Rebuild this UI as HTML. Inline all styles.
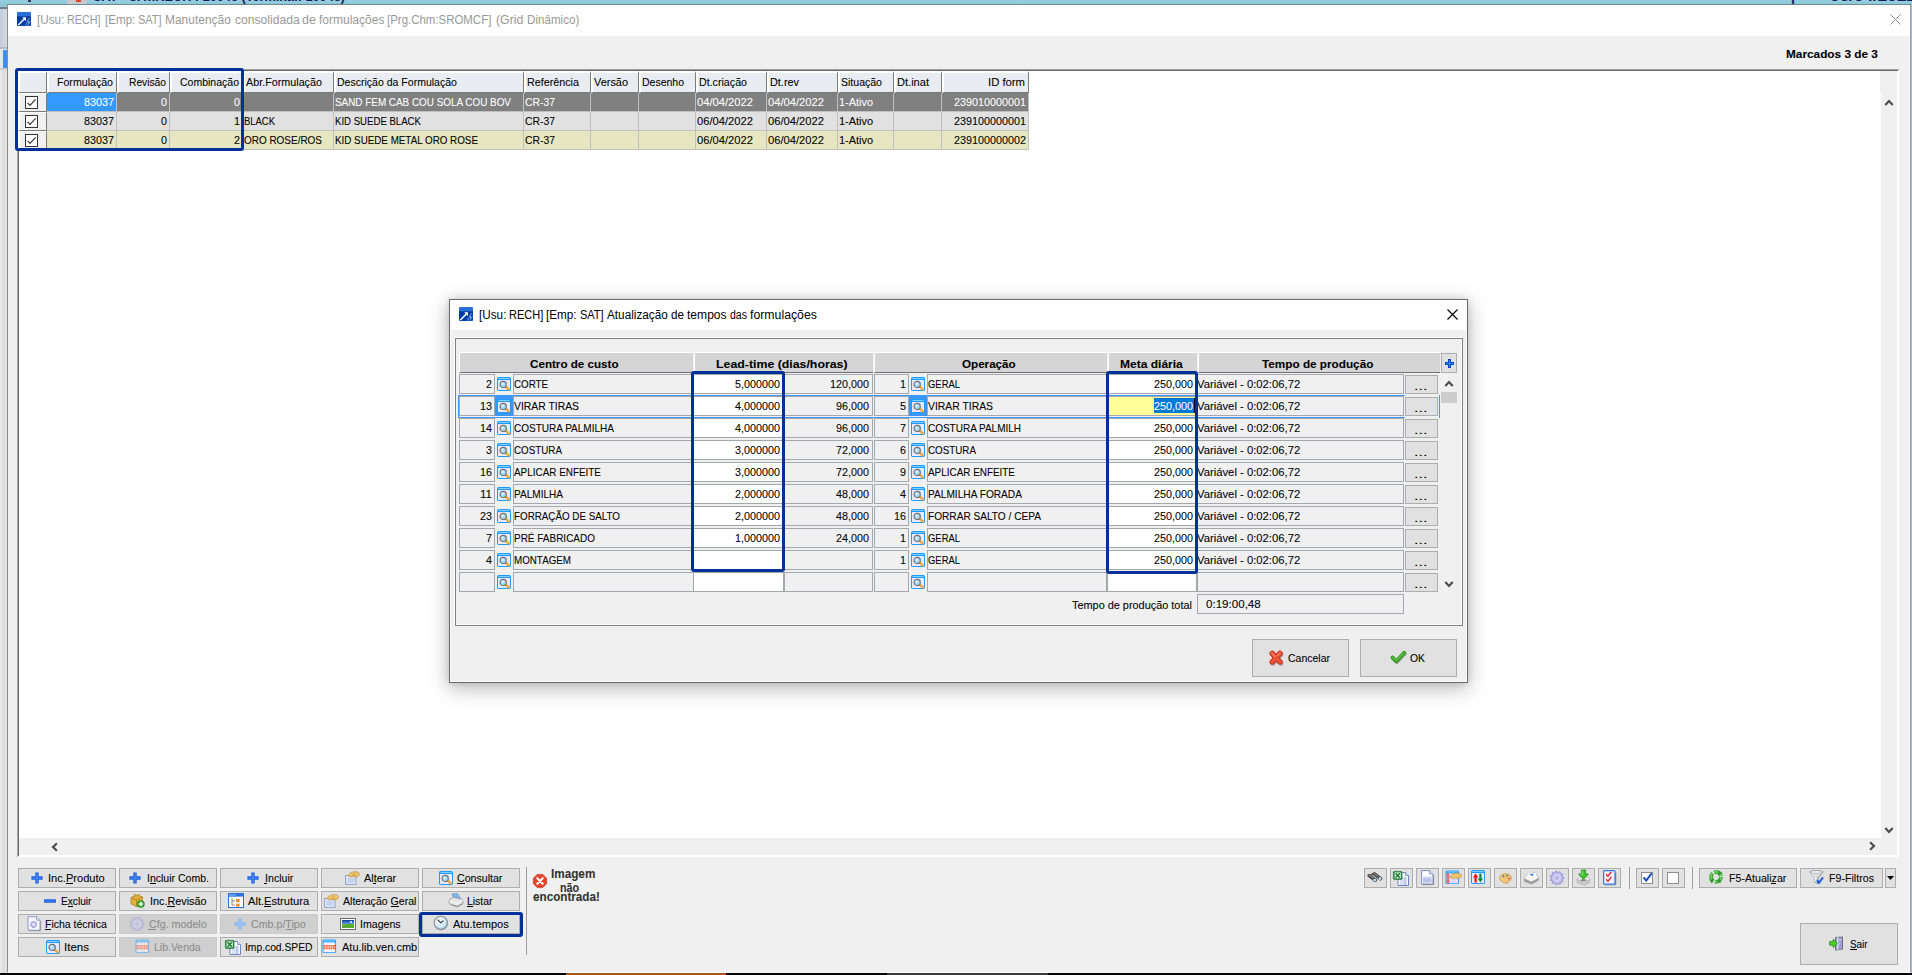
<!DOCTYPE html>
<html><head><meta charset="utf-8"><title>SROMCF</title>
<style>
html,body{margin:0;padding:0;}
body{width:1912px;height:975px;overflow:hidden;position:relative;background:#f0f0f0;font-family:"Liberation Sans",sans-serif;font-size:11px;}
div{position:absolute;box-sizing:border-box;}
svg{position:absolute;overflow:visible;}
.t{white-space:pre;}
u{text-decoration:underline;text-underline-offset:1px;}
</style></head><body>
<div style="left:0px;top:0px;width:1912px;height:5px;background:linear-gradient(#93d0e2,#8fc4d6);"></div>
<div style="left:0px;top:5px;width:8px;height:970px;background:linear-gradient(90deg,#ececec,#dcdcdc 40%,#e6e6e6);"></div>
<div style="left:0px;top:5px;width:8px;height:2px;background:#8fcadc;"></div>
<div style="left:0px;top:6.5px;width:8px;height:2px;background:#6f7b8c;"></div>
<div style="left:0px;top:8.5px;width:8px;height:38.5px;background:linear-gradient(90deg,#c3ccd9,#d6dce5);"></div>
<div style="left:0px;top:47px;width:8px;height:2px;background:#b4bac4;"></div>
<div style="left:0px;top:49px;width:8px;height:20px;background:#e6e6e6;"></div>
<div style="left:3px;top:50px;width:5px;height:18px;background:#3d90e8;"></div>
<div style="left:0px;top:68px;width:8px;height:2px;background:#c8ccd4;"></div>
<div style="left:1910px;top:5px;width:2px;height:968px;background:linear-gradient(90deg,#8e9ab4,#b9c3d6);"></div>
<div style="left:0;top:0;width:1912px;height:4px;overflow:hidden">
<div style="left:67px;top:0px;width:20px;height:4px;background:#c9c9c9;"></div>
<div style="left:75.5px;top:0px;width:5.5px;height:1.6px;background:#e0442a;"></div>
<div class="t" style="left:93.00px;top:-11.55px;font-size:14px;line-height:16px;color:#1c1c55;transform-origin:0 0;transform:scaleX(0.9074);font-weight:bold;-webkit-text-stroke:0.08px #1c1c55;">SAT - SAT.RECH : 10048 (Terminal: 10048)</div>
<div class="t" style="left:1791.00px;top:-10.65px;font-size:14px;line-height:16px;color:#1c1c55;transform-origin:0 0;transform:scaleX(1.0199);font-weight:bold;-webkit-text-stroke:0.08px #1c1c55;">|</div>
<div class="t" style="left:1830.00px;top:-11.55px;font-size:14px;line-height:16px;color:#1c1c55;transform-origin:0 0;transform:scaleX(1.2280);font-weight:bold;-webkit-text-stroke:0.08px #1c1c55;">06/04/2022</div>
</div>
<div style="left:28px;top:0px;width:2.5px;height:1.8px;background:#3a3a5e;"></div>
<div style="left:7px;top:4px;width:1904px;height:969px;background:#f0f0f0;border:1px solid #8c8c8c;border-top-color:#6f8d99;border-right-color:#9a9ea6;border-bottom-color:#fcfcfc;"></div>
<div style="left:1909px;top:36px;width:1px;height:936px;background:#f8f8f8;"></div>
<div style="left:8px;top:5px;width:1902px;height:31px;background:#fff;"></div>
<div style="left:0px;top:973px;width:1912px;height:2px;background:#050505;"></div>
<div style="left:566px;top:973px;width:160px;height:2px;background:#a8581a;"></div>
<div style="left:887px;top:973px;width:161px;height:2px;background:#3c3c3c;"></div>
<svg style="left:17px;top:12px" width="14" height="14" viewBox="0 0 14 14"><defs><linearGradient id="ai17" x1="0" y1="0" x2="0" y2="1"><stop offset="0" stop-color="#2a6fd8"/><stop offset=".28" stop-color="#2a6fd8"/><stop offset=".34" stop-color="#003a96"/><stop offset="1" stop-color="#0040b0"/></linearGradient></defs><rect width="14" height="14" rx="1" fill="url(#ai17)"/><path d="M1.3 13 L8 6.3" stroke="#fff" stroke-width="1.5"/><path d="M5.2 5.2 H9 V9.2 Z" fill="#fff"/><path d="M12.5 6 L8.5 13.5 M13.5 9 L10.5 13.8 M11 8.5 l1 3" stroke="#9fc0ee" stroke-width="1" opacity=".8"/></svg>
<div class="t" style="left:37.10px;top:12.84px;font-size:12px;line-height:14px;color:#999;transform-origin:0 0;transform:scaleX(0.9786);">[Usu:</div>
<div class="t" style="left:67.30px;top:12.84px;font-size:12px;line-height:14px;color:#999;transform-origin:0 0;transform:scaleX(0.8971);">RECH]</div>
<div class="t" style="left:104.50px;top:12.84px;font-size:12px;line-height:14px;color:#999;transform-origin:0 0;transform:scaleX(0.9672);">[Emp:</div>
<div class="t" style="left:137.90px;top:12.84px;font-size:12px;line-height:14px;color:#999;transform-origin:0 0;transform:scaleX(0.9159);">SAT]</div>
<div class="t" style="left:165.00px;top:12.84px;font-size:12px;line-height:14px;color:#999;transform-origin:0 0;transform:scaleX(0.9965);">Manutenção</div>
<div class="t" style="left:235.20px;top:12.84px;font-size:12px;line-height:14px;color:#999;transform-origin:0 0;transform:scaleX(1.0102);">consolidada</div>
<div class="t" style="left:302.10px;top:12.84px;font-size:12px;line-height:14px;color:#999;transform-origin:0 0;transform:scaleX(1.0417);">de</div>
<div class="t" style="left:318.80px;top:12.84px;font-size:12px;line-height:14px;color:#999;transform-origin:0 0;transform:scaleX(1.0006);">formulações</div>
<div class="t" style="left:387.30px;top:12.84px;font-size:12px;line-height:14px;color:#999;transform-origin:0 0;transform:scaleX(0.9540);">[Prg.Chm:SROMCF]</div>
<div class="t" style="left:495.50px;top:12.84px;font-size:12px;line-height:14px;color:#999;transform-origin:0 0;transform:scaleX(1.0310);">(Grid</div>
<div class="t" style="left:526.50px;top:12.84px;font-size:12px;line-height:14px;color:#999;transform-origin:0 0;transform:scaleX(0.9680);">Dinâmico)</div>
<svg style="left:1890px;top:14px" width="11" height="11" viewBox="0 0 11 11"><path d="M0.5 0.5 L10.5 10.5 M10.5 0.5 L0.5 10.5" stroke="#8a8a8a" stroke-width="1" fill="none"/></svg>
<div class="t" style="left:1786.00px;top:47.69px;font-size:11px;line-height:13px;color:#000;transform-origin:0 0;transform:scaleX(1.0741);font-weight:bold;-webkit-text-stroke:0.08px #000;">Marcados 3 de 3</div>
<div style="left:17px;top:69px;width:1882px;height:788px;background:#fff;"></div>
<div style="left:17px;top:69px;width:1882px;height:1px;background:#a0a0a0;"></div>
<div style="left:18px;top:70px;width:1880px;height:1px;background:#696969;"></div>
<div style="left:17px;top:69px;width:1px;height:788px;background:#a8a8a8;"></div>
<div style="left:18px;top:70px;width:1px;height:786px;background:#696969;"></div>
<div style="left:1881px;top:71px;width:16px;height:767px;background:#f0f0f0;"></div>
<div style="left:1880px;top:71px;width:1px;height:22px;background:#f0f0f0;"></div>
<svg style="left:1884.6px;top:98.8px" width="8" height="7" viewBox="0 0 8 7"><path d="M0.3 5.9 L4 2 L7.7 5.9" stroke="#4d4d4d" stroke-width="2.2" fill="none"/></svg>
<svg style="left:1884.6px;top:826.5px" width="8" height="7" viewBox="0 0 8 7"><path d="M0.3 1.1 L4 5 L7.7 1.1" stroke="#4d4d4d" stroke-width="2.2" fill="none"/></svg>
<div style="left:19px;top:838px;width:1878px;height:17px;background:#f0f0f0;"></div>
<svg style="left:51px;top:843px" width="7" height="8" viewBox="0 0 7 8"><path d="M5.9 0.3 L2 4 L5.9 7.7" stroke="#4d4d4d" stroke-width="2.2" fill="none"/></svg>
<svg style="left:1868.5px;top:842.4px" width="7" height="8" viewBox="0 0 7 8"><path d="M1.1 0.3 L5 4 L1.1 7.7" stroke="#4d4d4d" stroke-width="2.2" fill="none"/></svg>
<div style="left:18px;top:71px;width:29px;height:22px;background:#e9edf1;border-top:2px solid #fff;border-left:2px solid #fff;border-right:1px solid #7a7a7a;border-bottom:1px solid #7a7a7a;"></div>
<div style="left:47px;top:71px;width:70px;height:22px;background:#e9edf1;border-top:2px solid #fff;border-left:2px solid #fff;border-right:1px solid #7a7a7a;border-bottom:1px solid #7a7a7a;"></div>
<div class="t" style="left:56.50px;top:75.69px;font-size:11px;line-height:13px;color:#000;transform-origin:0 0;transform:scaleX(0.9640);-webkit-text-stroke:0.08px #000;">Formulação</div>
<div style="left:117px;top:71px;width:53px;height:22px;background:#e9edf1;border-top:2px solid #fff;border-left:2px solid #fff;border-right:1px solid #7a7a7a;border-bottom:1px solid #7a7a7a;"></div>
<div class="t" style="left:128.50px;top:75.69px;font-size:11px;line-height:13px;color:#000;transform-origin:0 0;transform:scaleX(0.9308);-webkit-text-stroke:0.08px #000;">Revisão</div>
<div style="left:170px;top:71px;width:73px;height:22px;background:#e9edf1;border-top:2px solid #fff;border-left:2px solid #fff;border-right:1px solid #7a7a7a;border-bottom:1px solid #7a7a7a;"></div>
<div class="t" style="left:179.50px;top:75.69px;font-size:11px;line-height:13px;color:#000;transform-origin:0 0;transform:scaleX(0.9550);-webkit-text-stroke:0.08px #000;">Combinação</div>
<div style="left:243px;top:71px;width:91px;height:22px;background:#e9edf1;border-top:2px solid #fff;border-left:2px solid #fff;border-right:1px solid #7a7a7a;border-bottom:1px solid #7a7a7a;"></div>
<div class="t" style="left:245.80px;top:75.69px;font-size:11px;line-height:13px;color:#000;transform-origin:0 0;transform:scaleX(0.9785);-webkit-text-stroke:0.08px #000;">Abr.Formulação</div>
<div style="left:334px;top:71px;width:190px;height:22px;background:#e9edf1;border-top:2px solid #fff;border-left:2px solid #fff;border-right:1px solid #7a7a7a;border-bottom:1px solid #7a7a7a;"></div>
<div class="t" style="left:336.80px;top:75.69px;font-size:11px;line-height:13px;color:#000;transform-origin:0 0;transform:scaleX(0.9571);-webkit-text-stroke:0.08px #000;">Descrição da Formulação</div>
<div style="left:524px;top:71px;width:67px;height:22px;background:#e9edf1;border-top:2px solid #fff;border-left:2px solid #fff;border-right:1px solid #7a7a7a;border-bottom:1px solid #7a7a7a;"></div>
<div class="t" style="left:526.80px;top:75.69px;font-size:11px;line-height:13px;color:#000;transform-origin:0 0;transform:scaleX(0.9771);-webkit-text-stroke:0.08px #000;">Referência</div>
<div style="left:591px;top:71px;width:48px;height:22px;background:#e9edf1;border-top:2px solid #fff;border-left:2px solid #fff;border-right:1px solid #7a7a7a;border-bottom:1px solid #7a7a7a;"></div>
<div class="t" style="left:593.80px;top:75.69px;font-size:11px;line-height:13px;color:#000;transform-origin:0 0;transform:scaleX(0.9922);-webkit-text-stroke:0.08px #000;">Versão</div>
<div style="left:639px;top:71px;width:57px;height:22px;background:#e9edf1;border-top:2px solid #fff;border-left:2px solid #fff;border-right:1px solid #7a7a7a;border-bottom:1px solid #7a7a7a;"></div>
<div class="t" style="left:641.80px;top:75.69px;font-size:11px;line-height:13px;color:#000;transform-origin:0 0;transform:scaleX(0.9532);-webkit-text-stroke:0.08px #000;">Desenho</div>
<div style="left:696px;top:71px;width:71px;height:22px;background:#e9edf1;border-top:2px solid #fff;border-left:2px solid #fff;border-right:1px solid #7a7a7a;border-bottom:1px solid #7a7a7a;"></div>
<div class="t" style="left:698.80px;top:75.69px;font-size:11px;line-height:13px;color:#000;transform-origin:0 0;transform:scaleX(0.9691);-webkit-text-stroke:0.08px #000;">Dt.criação</div>
<div style="left:767px;top:71px;width:71px;height:22px;background:#e9edf1;border-top:2px solid #fff;border-left:2px solid #fff;border-right:1px solid #7a7a7a;border-bottom:1px solid #7a7a7a;"></div>
<div class="t" style="left:769.80px;top:75.69px;font-size:11px;line-height:13px;color:#000;transform-origin:0 0;transform:scaleX(0.9883);-webkit-text-stroke:0.08px #000;">Dt.rev</div>
<div style="left:838px;top:71px;width:56px;height:22px;background:#e9edf1;border-top:2px solid #fff;border-left:2px solid #fff;border-right:1px solid #7a7a7a;border-bottom:1px solid #7a7a7a;"></div>
<div class="t" style="left:840.80px;top:75.69px;font-size:11px;line-height:13px;color:#000;transform-origin:0 0;transform:scaleX(0.9570);-webkit-text-stroke:0.08px #000;">Situação</div>
<div style="left:894px;top:71px;width:48px;height:22px;background:#e9edf1;border-top:2px solid #fff;border-left:2px solid #fff;border-right:1px solid #7a7a7a;border-bottom:1px solid #7a7a7a;"></div>
<div class="t" style="left:896.80px;top:75.69px;font-size:11px;line-height:13px;color:#000;transform-origin:0 0;transform:scaleX(1.0059);-webkit-text-stroke:0.08px #000;">Dt.inat</div>
<div style="left:942px;top:71px;width:87px;height:22px;background:#e9edf1;border-top:2px solid #fff;border-left:2px solid #fff;border-right:1px solid #7a7a7a;border-bottom:1px solid #7a7a7a;"></div>
<div class="t" style="left:987.50px;top:75.69px;font-size:11px;line-height:13px;color:#000;transform-origin:0 0;transform:scaleX(1.0260);-webkit-text-stroke:0.08px #000;">ID form</div>
<div style="left:18px;top:93px;width:29px;height:19px;background:#f0f0f0;border-top:1px solid #fff;border-left:2px solid #fff;border-right:1px solid #7a7a7a;border-bottom:1px solid #7a7a7a;"></div>
<div style="left:25px;top:96px;width:13px;height:13px;background:#fff;border:1px solid #333;"></div>
<svg style="left:25px;top:96px" width="13" height="13" viewBox="0 0 13 13"><path d="M2.6 6.8 L5 9.4 L10.6 3.4" stroke="#333" stroke-width="1.2" fill="none"/></svg>
<div style="left:47px;top:93px;width:70px;height:19px;background:#3399ff;border-right:1px solid #c0c0c0;border-bottom:1px solid #c0c0c0;"></div>
<div class="t" style="left:84.00px;top:95.69px;font-size:11px;line-height:13px;color:#fff;transform-origin:0 0;transform:scaleX(0.9796);-webkit-text-stroke:0.08px #fff;">83037</div>
<div style="left:117px;top:93px;width:53px;height:19px;background:#808080;border-right:1px solid #c0c0c0;border-bottom:1px solid #c0c0c0;"></div>
<div class="t" style="left:161.00px;top:95.69px;font-size:11px;line-height:13px;color:#fff;transform-origin:0 0;transform:scaleX(0.9796);-webkit-text-stroke:0.08px #fff;">0</div>
<div style="left:170px;top:93px;width:73px;height:19px;background:#808080;border-right:1px solid #c0c0c0;border-bottom:1px solid #c0c0c0;"></div>
<div class="t" style="left:234.00px;top:95.69px;font-size:11px;line-height:13px;color:#fff;transform-origin:0 0;transform:scaleX(0.9796);-webkit-text-stroke:0.08px #fff;">0</div>
<div style="left:243px;top:93px;width:91px;height:19px;background:#808080;border-right:1px solid #c0c0c0;border-bottom:1px solid #c0c0c0;"></div>
<div style="left:334px;top:93px;width:190px;height:19px;background:#808080;border-right:1px solid #c0c0c0;border-bottom:1px solid #c0c0c0;"></div>
<div class="t" style="left:335.20px;top:95.69px;font-size:11px;line-height:13px;color:#fff;transform-origin:0 0;transform:scaleX(0.8995);-webkit-text-stroke:0.08px #fff;">SAND FEM CAB COU SOLA COU BOV</div>
<div style="left:524px;top:93px;width:67px;height:19px;background:#808080;border-right:1px solid #c0c0c0;border-bottom:1px solid #c0c0c0;"></div>
<div class="t" style="left:525.20px;top:95.69px;font-size:11px;line-height:13px;color:#fff;transform-origin:0 0;transform:scaleX(0.9440);-webkit-text-stroke:0.08px #fff;">CR-37</div>
<div style="left:591px;top:93px;width:48px;height:19px;background:#808080;border-right:1px solid #c0c0c0;border-bottom:1px solid #c0c0c0;"></div>
<div style="left:639px;top:93px;width:57px;height:19px;background:#808080;border-right:1px solid #c0c0c0;border-bottom:1px solid #c0c0c0;"></div>
<div style="left:696px;top:93px;width:71px;height:19px;background:#808080;border-right:1px solid #c0c0c0;border-bottom:1px solid #c0c0c0;"></div>
<div class="t" style="left:697.20px;top:95.69px;font-size:11px;line-height:13px;color:#fff;transform-origin:0 0;transform:scaleX(1.0159);-webkit-text-stroke:0.08px #fff;">04/04/2022</div>
<div style="left:767px;top:93px;width:71px;height:19px;background:#808080;border-right:1px solid #c0c0c0;border-bottom:1px solid #c0c0c0;"></div>
<div class="t" style="left:768.20px;top:95.69px;font-size:11px;line-height:13px;color:#fff;transform-origin:0 0;transform:scaleX(1.0159);-webkit-text-stroke:0.08px #fff;">04/04/2022</div>
<div style="left:838px;top:93px;width:56px;height:19px;background:#808080;border-right:1px solid #c0c0c0;border-bottom:1px solid #c0c0c0;"></div>
<div class="t" style="left:839.20px;top:95.69px;font-size:11px;line-height:13px;color:#fff;transform-origin:0 0;transform:scaleX(0.9927);-webkit-text-stroke:0.08px #fff;">1-Ativo</div>
<div style="left:894px;top:93px;width:48px;height:19px;background:#808080;border-right:1px solid #c0c0c0;border-bottom:1px solid #c0c0c0;"></div>
<div style="left:942px;top:93px;width:87px;height:19px;background:#808080;border-right:1px solid #c0c0c0;border-bottom:1px solid #c0c0c0;"></div>
<div class="t" style="left:954.00px;top:95.69px;font-size:11px;line-height:13px;color:#fff;transform-origin:0 0;transform:scaleX(0.9796);-webkit-text-stroke:0.08px #fff;">239010000001</div>
<div style="left:18px;top:112px;width:29px;height:19px;background:#f0f0f0;border-top:1px solid #fff;border-left:2px solid #fff;border-right:1px solid #7a7a7a;border-bottom:1px solid #7a7a7a;"></div>
<div style="left:25px;top:115px;width:13px;height:13px;background:#fff;border:1px solid #333;"></div>
<svg style="left:25px;top:115px" width="13" height="13" viewBox="0 0 13 13"><path d="M2.6 6.8 L5 9.4 L10.6 3.4" stroke="#333" stroke-width="1.2" fill="none"/></svg>
<div style="left:47px;top:112px;width:70px;height:19px;background:#e1e1e1;border-right:1px solid #c0c0c0;border-bottom:1px solid #c0c0c0;"></div>
<div class="t" style="left:84.00px;top:114.69px;font-size:11px;line-height:13px;color:#000;transform-origin:0 0;transform:scaleX(0.9796);-webkit-text-stroke:0.08px #000;">83037</div>
<div style="left:117px;top:112px;width:53px;height:19px;background:#e1e1e1;border-right:1px solid #c0c0c0;border-bottom:1px solid #c0c0c0;"></div>
<div class="t" style="left:161.00px;top:114.69px;font-size:11px;line-height:13px;color:#000;transform-origin:0 0;transform:scaleX(0.9796);-webkit-text-stroke:0.08px #000;">0</div>
<div style="left:170px;top:112px;width:73px;height:19px;background:#e1e1e1;border-right:1px solid #c0c0c0;border-bottom:1px solid #c0c0c0;"></div>
<div class="t" style="left:234.00px;top:114.69px;font-size:11px;line-height:13px;color:#000;transform-origin:0 0;transform:scaleX(0.9796);-webkit-text-stroke:0.08px #000;">1</div>
<div style="left:243px;top:112px;width:91px;height:19px;background:#e1e1e1;border-right:1px solid #c0c0c0;border-bottom:1px solid #c0c0c0;"></div>
<div class="t" style="left:244.20px;top:114.69px;font-size:11px;line-height:13px;color:#000;transform-origin:0 0;transform:scaleX(0.8589);-webkit-text-stroke:0.08px #000;">BLACK</div>
<div style="left:334px;top:112px;width:190px;height:19px;background:#e1e1e1;border-right:1px solid #c0c0c0;border-bottom:1px solid #c0c0c0;"></div>
<div class="t" style="left:335.20px;top:114.69px;font-size:11px;line-height:13px;color:#000;transform-origin:0 0;transform:scaleX(0.8734);-webkit-text-stroke:0.08px #000;">KID SUEDE BLACK</div>
<div style="left:524px;top:112px;width:67px;height:19px;background:#e1e1e1;border-right:1px solid #c0c0c0;border-bottom:1px solid #c0c0c0;"></div>
<div class="t" style="left:525.20px;top:114.69px;font-size:11px;line-height:13px;color:#000;transform-origin:0 0;transform:scaleX(0.9440);-webkit-text-stroke:0.08px #000;">CR-37</div>
<div style="left:591px;top:112px;width:48px;height:19px;background:#e1e1e1;border-right:1px solid #c0c0c0;border-bottom:1px solid #c0c0c0;"></div>
<div style="left:639px;top:112px;width:57px;height:19px;background:#e1e1e1;border-right:1px solid #c0c0c0;border-bottom:1px solid #c0c0c0;"></div>
<div style="left:696px;top:112px;width:71px;height:19px;background:#e1e1e1;border-right:1px solid #c0c0c0;border-bottom:1px solid #c0c0c0;"></div>
<div class="t" style="left:697.20px;top:114.69px;font-size:11px;line-height:13px;color:#000;transform-origin:0 0;transform:scaleX(1.0159);-webkit-text-stroke:0.08px #000;">06/04/2022</div>
<div style="left:767px;top:112px;width:71px;height:19px;background:#e1e1e1;border-right:1px solid #c0c0c0;border-bottom:1px solid #c0c0c0;"></div>
<div class="t" style="left:768.20px;top:114.69px;font-size:11px;line-height:13px;color:#000;transform-origin:0 0;transform:scaleX(1.0159);-webkit-text-stroke:0.08px #000;">06/04/2022</div>
<div style="left:838px;top:112px;width:56px;height:19px;background:#e1e1e1;border-right:1px solid #c0c0c0;border-bottom:1px solid #c0c0c0;"></div>
<div class="t" style="left:839.20px;top:114.69px;font-size:11px;line-height:13px;color:#000;transform-origin:0 0;transform:scaleX(0.9927);-webkit-text-stroke:0.08px #000;">1-Ativo</div>
<div style="left:894px;top:112px;width:48px;height:19px;background:#e1e1e1;border-right:1px solid #c0c0c0;border-bottom:1px solid #c0c0c0;"></div>
<div style="left:942px;top:112px;width:87px;height:19px;background:#e1e1e1;border-right:1px solid #c0c0c0;border-bottom:1px solid #c0c0c0;"></div>
<div class="t" style="left:954.00px;top:114.69px;font-size:11px;line-height:13px;color:#000;transform-origin:0 0;transform:scaleX(0.9796);-webkit-text-stroke:0.08px #000;">239100000001</div>
<div style="left:18px;top:131px;width:29px;height:19px;background:#f0f0f0;border-top:1px solid #fff;border-left:2px solid #fff;border-right:1px solid #7a7a7a;border-bottom:1px solid #7a7a7a;"></div>
<div style="left:25px;top:134px;width:13px;height:13px;background:#fff;border:1px solid #333;"></div>
<svg style="left:25px;top:134px" width="13" height="13" viewBox="0 0 13 13"><path d="M2.6 6.8 L5 9.4 L10.6 3.4" stroke="#333" stroke-width="1.2" fill="none"/></svg>
<div style="left:47px;top:131px;width:70px;height:19px;background:#e6e6c0;border-right:1px solid #c0c0c0;border-bottom:1px solid #c0c0c0;"></div>
<div class="t" style="left:84.00px;top:133.69px;font-size:11px;line-height:13px;color:#000;transform-origin:0 0;transform:scaleX(0.9796);-webkit-text-stroke:0.08px #000;">83037</div>
<div style="left:117px;top:131px;width:53px;height:19px;background:#e6e6c0;border-right:1px solid #c0c0c0;border-bottom:1px solid #c0c0c0;"></div>
<div class="t" style="left:161.00px;top:133.69px;font-size:11px;line-height:13px;color:#000;transform-origin:0 0;transform:scaleX(0.9796);-webkit-text-stroke:0.08px #000;">0</div>
<div style="left:170px;top:131px;width:73px;height:19px;background:#e6e6c0;border-right:1px solid #c0c0c0;border-bottom:1px solid #c0c0c0;"></div>
<div class="t" style="left:234.00px;top:133.69px;font-size:11px;line-height:13px;color:#000;transform-origin:0 0;transform:scaleX(0.9796);-webkit-text-stroke:0.08px #000;">2</div>
<div style="left:243px;top:131px;width:91px;height:19px;background:#e6e6c0;border-right:1px solid #c0c0c0;border-bottom:1px solid #c0c0c0;"></div>
<div class="t" style="left:244.20px;top:133.69px;font-size:11px;line-height:13px;color:#000;transform-origin:0 0;transform:scaleX(0.9047);-webkit-text-stroke:0.08px #000;">ORO ROSE/ROS</div>
<div style="left:334px;top:131px;width:190px;height:19px;background:#e6e6c0;border-right:1px solid #c0c0c0;border-bottom:1px solid #c0c0c0;"></div>
<div class="t" style="left:335.20px;top:133.69px;font-size:11px;line-height:13px;color:#000;transform-origin:0 0;transform:scaleX(0.8925);-webkit-text-stroke:0.08px #000;">KID SUEDE METAL ORO ROSE</div>
<div style="left:524px;top:131px;width:67px;height:19px;background:#e6e6c0;border-right:1px solid #c0c0c0;border-bottom:1px solid #c0c0c0;"></div>
<div class="t" style="left:525.20px;top:133.69px;font-size:11px;line-height:13px;color:#000;transform-origin:0 0;transform:scaleX(0.9440);-webkit-text-stroke:0.08px #000;">CR-37</div>
<div style="left:591px;top:131px;width:48px;height:19px;background:#e6e6c0;border-right:1px solid #c0c0c0;border-bottom:1px solid #c0c0c0;"></div>
<div style="left:639px;top:131px;width:57px;height:19px;background:#e6e6c0;border-right:1px solid #c0c0c0;border-bottom:1px solid #c0c0c0;"></div>
<div style="left:696px;top:131px;width:71px;height:19px;background:#e6e6c0;border-right:1px solid #c0c0c0;border-bottom:1px solid #c0c0c0;"></div>
<div class="t" style="left:697.20px;top:133.69px;font-size:11px;line-height:13px;color:#000;transform-origin:0 0;transform:scaleX(1.0159);-webkit-text-stroke:0.08px #000;">06/04/2022</div>
<div style="left:767px;top:131px;width:71px;height:19px;background:#e6e6c0;border-right:1px solid #c0c0c0;border-bottom:1px solid #c0c0c0;"></div>
<div class="t" style="left:768.20px;top:133.69px;font-size:11px;line-height:13px;color:#000;transform-origin:0 0;transform:scaleX(1.0159);-webkit-text-stroke:0.08px #000;">06/04/2022</div>
<div style="left:838px;top:131px;width:56px;height:19px;background:#e6e6c0;border-right:1px solid #c0c0c0;border-bottom:1px solid #c0c0c0;"></div>
<div class="t" style="left:839.20px;top:133.69px;font-size:11px;line-height:13px;color:#000;transform-origin:0 0;transform:scaleX(0.9927);-webkit-text-stroke:0.08px #000;">1-Ativo</div>
<div style="left:894px;top:131px;width:48px;height:19px;background:#e6e6c0;border-right:1px solid #c0c0c0;border-bottom:1px solid #c0c0c0;"></div>
<div style="left:942px;top:131px;width:87px;height:19px;background:#e6e6c0;border-right:1px solid #c0c0c0;border-bottom:1px solid #c0c0c0;"></div>
<div class="t" style="left:954.00px;top:133.69px;font-size:11px;line-height:13px;color:#000;transform-origin:0 0;transform:scaleX(0.9796);-webkit-text-stroke:0.08px #000;">239100000002</div>
<div style="left:15px;top:68px;width:229px;height:83px;border:3px solid #00309a;border-radius:3px;"></div>
<div style="left:449px;top:299px;width:1019px;height:384px;background:#f0f0f0;border:1px solid #6a6a6a;box-shadow:0 5px 19px 1px rgba(0,0,0,.26), 0 0 7px rgba(0,0,0,.13);"></div>
<div style="left:450px;top:300px;width:1017px;height:30px;background:#fff;"></div>
<div style="left:450px;top:300px;width:1017px;height:382px;border:1px solid #fafafa;border-top:none;"></div>
<svg style="left:459px;top:307px" width="14" height="14" viewBox="0 0 14 14"><defs><linearGradient id="ai459" x1="0" y1="0" x2="0" y2="1"><stop offset="0" stop-color="#2a6fd8"/><stop offset=".28" stop-color="#2a6fd8"/><stop offset=".34" stop-color="#003a96"/><stop offset="1" stop-color="#0040b0"/></linearGradient></defs><rect width="14" height="14" rx="1" fill="url(#ai459)"/><path d="M1.3 13 L8 6.3" stroke="#fff" stroke-width="1.5"/><path d="M5.2 5.2 H9 V9.2 Z" fill="#fff"/><path d="M12.5 6 L8.5 13.5 M13.5 9 L10.5 13.8 M11 8.5 l1 3" stroke="#9fc0ee" stroke-width="1" opacity=".8"/></svg>
<div class="t" style="left:478.90px;top:307.84px;font-size:12px;line-height:14px;color:#000;transform-origin:0 0;transform:scaleX(0.9786);">[Usu:</div>
<div class="t" style="left:508.70px;top:307.84px;font-size:12px;line-height:14px;color:#000;transform-origin:0 0;transform:scaleX(0.9185);">RECH]</div>
<div class="t" style="left:546.30px;top:307.84px;font-size:12px;line-height:14px;color:#000;transform-origin:0 0;transform:scaleX(0.9768);">[Emp:</div>
<div class="t" style="left:580.20px;top:307.84px;font-size:12px;line-height:14px;color:#000;transform-origin:0 0;transform:scaleX(0.9159);">SAT]</div>
<div class="t" style="left:607.00px;top:307.84px;font-size:12px;line-height:14px;color:#000;transform-origin:0 0;transform:scaleX(0.9802);">Atualização</div>
<div class="t" style="left:671.30px;top:307.84px;font-size:12px;line-height:14px;color:#000;transform-origin:0 0;transform:scaleX(0.9667);">de</div>
<div class="t" style="left:687.00px;top:307.84px;font-size:12px;line-height:14px;color:#000;transform-origin:0 0;transform:scaleX(1.0065);">tempos</div>
<div class="t" style="left:730.30px;top:307.84px;font-size:12px;line-height:14px;color:#000;transform-origin:0 0;transform:scaleX(0.8788);">das</div>
<div class="t" style="left:750.10px;top:307.84px;font-size:12px;line-height:14px;color:#000;transform-origin:0 0;transform:scaleX(1.0236);">formulações</div>
<svg style="left:1447px;top:309px" width="11" height="11" viewBox="0 0 11 11"><path d="M0.5 0.5 L10.5 10.5 M10.5 0.5 L0.5 10.5" stroke="#000" stroke-width="1.1" fill="none"/></svg>
<div style="left:454px;top:337px;width:1008px;height:288px;border:1px solid #fff;"></div>
<div style="left:455px;top:338px;width:1008px;height:288px;border:1px solid #808080;"></div>
<div style="left:459px;top:352px;width:234px;height:21px;background:#d5d5d5;border-top:1px solid #fff;border-left:1px solid #fff;border-bottom:1px solid #707070;"></div>
<div style="left:694px;top:352px;width:179px;height:21px;background:#d5d5d5;border-top:1px solid #fff;border-left:1px solid #fff;border-bottom:1px solid #707070;"></div>
<div style="left:874px;top:352px;width:233px;height:21px;background:#d5d5d5;border-top:1px solid #fff;border-left:1px solid #fff;border-bottom:1px solid #707070;"></div>
<div style="left:1108px;top:352px;width:89px;height:21px;background:#d5d5d5;border-top:1px solid #fff;border-left:1px solid #fff;border-bottom:1px solid #707070;"></div>
<div style="left:1198px;top:352px;width:242px;height:21px;background:#d5d5d5;border-top:1px solid #fff;border-left:1px solid #fff;border-bottom:1px solid #707070;"></div>
<div class="t" style="left:530.00px;top:357.69px;font-size:11px;line-height:13px;color:#000;transform-origin:0 0;transform:scaleX(1.0579);font-weight:bold;-webkit-text-stroke:0.08px #000;">Centro de custo</div>
<div class="t" style="left:716.00px;top:357.69px;font-size:11px;line-height:13px;color:#000;transform-origin:0 0;transform:scaleX(1.1209);font-weight:bold;-webkit-text-stroke:0.08px #000;">Lead-time (dias/horas)</div>
<div class="t" style="left:962.00px;top:357.69px;font-size:11px;line-height:13px;color:#000;transform-origin:0 0;transform:scaleX(1.0575);font-weight:bold;-webkit-text-stroke:0.08px #000;">Operação</div>
<div class="t" style="left:1119.70px;top:357.69px;font-size:11px;line-height:13px;color:#000;transform-origin:0 0;transform:scaleX(1.0922);font-weight:bold;-webkit-text-stroke:0.08px #000;">Meta diária</div>
<div class="t" style="left:1262.30px;top:357.69px;font-size:11px;line-height:13px;color:#000;transform-origin:0 0;transform:scaleX(1.0676);font-weight:bold;-webkit-text-stroke:0.08px #000;">Tempo de produção</div>
<div style="left:1441px;top:353px;width:16px;height:20px;background:#e1e1e1;border:1px solid #adadad;"></div>
<svg style="left:1445px;top:359px" width="9" height="9" viewBox="0 0 9 9"><path d="M4.5 0 V9 M0 4.5 H9" stroke="#0b45c0" stroke-width="3" fill="none"/><path d="M4.5 1 V8 M1 4.5 H8" stroke="#2f8cf2" stroke-width="1" fill="none"/></svg>
<div style="left:1441px;top:374px;width:17px;height:220px;background:#f0f0f0;"></div>
<svg style="left:1445px;top:380px" width="8" height="7" viewBox="0 0 8 7"><path d="M0.3 5.9 L4 2 L7.7 5.9" stroke="#4d4d4d" stroke-width="2.2" fill="none"/></svg>
<svg style="left:1445px;top:581px" width="8" height="7" viewBox="0 0 8 7"><path d="M0.3 1.1 L4 5 L7.7 1.1" stroke="#4d4d4d" stroke-width="2.2" fill="none"/></svg>
<div style="left:1441px;top:392px;width:16px;height:11px;background:#cdcdcd;"></div>
<div style="left:459px;top:374px;width:36px;height:20px;background:#f0f0f0;border:1px solid #a4a7ac;"></div>
<div style="left:513px;top:374px;width:181px;height:20px;background:#f0f0f0;border:1px solid #a4a7ac;"></div>
<div style="left:693px;top:374px;width:91px;height:20px;background:#fff;border:1px solid #a4a7ac;"></div>
<div style="left:784px;top:374px;width:89px;height:20px;background:#f0f0f0;border:1px solid #a4a7ac;"></div>
<div style="left:874px;top:374px;width:35px;height:20px;background:#f0f0f0;border:1px solid #a4a7ac;"></div>
<div style="left:927px;top:374px;width:180px;height:20px;background:#f0f0f0;border:1px solid #a4a7ac;"></div>
<div style="left:1107px;top:374px;width:90px;height:20px;background:#fff;border:1px solid #a4a7ac;"></div>
<div style="left:1197px;top:374px;width:207px;height:20px;background:#f0f0f0;border:1px solid #a4a7ac;"></div>
<div style="left:1405px;top:375px;width:33px;height:19px;background:#e1e1e1;border:1px solid #adadad;"></div>
<div class="t" style="left:1413.85px;top:379.69px;font-size:11px;line-height:13px;color:#000;transform-origin:0 0;transform:scaleX(1.4694);-webkit-text-stroke:0.08px #000;">...</div>
<svg style="left:497px;top:377px" width="14" height="14" viewBox="0 0 14 14"><rect x="0" y="0" width="14" height="14" rx="1.8" fill="#1e9bff"/><rect x="1.5" y="1" width="11" height="1" fill="#86ccff"/><rect x="1" y="3" width="12" height="10" fill="#ece8fb"/><path d="M8.8 9.6 L12.4 13" stroke="#f39a1e" stroke-width="2.2"/><path d="M9.6 10 l2.4 2.3" stroke="#ffe27a" stroke-width=".8" stroke-dasharray="1 1"/><circle cx="6.2" cy="7.4" r="3.1" fill="#a9dcf7" stroke="#707070" stroke-width="1.2"/><circle cx="5.5" cy="6.7" r="1.2" fill="#d9f1fd"/></svg>
<svg style="left:911px;top:377px" width="14" height="14" viewBox="0 0 14 14"><rect x="0" y="0" width="14" height="14" rx="1.8" fill="#1e9bff"/><rect x="1.5" y="1" width="11" height="1" fill="#86ccff"/><rect x="1" y="3" width="12" height="10" fill="#ece8fb"/><path d="M8.8 9.6 L12.4 13" stroke="#f39a1e" stroke-width="2.2"/><path d="M9.6 10 l2.4 2.3" stroke="#ffe27a" stroke-width=".8" stroke-dasharray="1 1"/><circle cx="6.2" cy="7.4" r="3.1" fill="#a9dcf7" stroke="#707070" stroke-width="1.2"/><circle cx="5.5" cy="6.7" r="1.2" fill="#d9f1fd"/></svg>
<div class="t" style="left:486.00px;top:377.69px;font-size:11px;line-height:13px;color:#000;transform-origin:0 0;transform:scaleX(0.9796);-webkit-text-stroke:0.08px #000;">2</div>
<div class="t" style="left:513.50px;top:377.69px;font-size:11px;line-height:13px;color:#000;transform-origin:0 0;transform:scaleX(0.8878);-webkit-text-stroke:0.08px #000;">CORTE</div>
<div class="t" style="left:734.50px;top:377.69px;font-size:11px;line-height:13px;color:#000;transform-origin:0 0;transform:scaleX(0.9796);-webkit-text-stroke:0.08px #000;">5,000000</div>
<div class="t" style="left:830.00px;top:377.69px;font-size:11px;line-height:13px;color:#000;transform-origin:0 0;transform:scaleX(0.9796);-webkit-text-stroke:0.08px #000;">120,000</div>
<div class="t" style="left:900.00px;top:377.69px;font-size:11px;line-height:13px;color:#000;transform-origin:0 0;transform:scaleX(0.9796);-webkit-text-stroke:0.08px #000;">1</div>
<div class="t" style="left:927.50px;top:377.69px;font-size:11px;line-height:13px;color:#000;transform-origin:0 0;transform:scaleX(0.8576);-webkit-text-stroke:0.08px #000;">GERAL</div>
<div class="t" style="left:1154.00px;top:377.69px;font-size:11px;line-height:13px;color:#000;transform-origin:0 0;transform:scaleX(0.9796);-webkit-text-stroke:0.08px #000;">250,000</div>
<div class="t" style="left:1196.80px;top:377.69px;font-size:11px;line-height:13px;color:#000;transform-origin:0 0;transform:scaleX(1.0250);-webkit-text-stroke:0.08px #000;">Variável - 0:02:06,72</div>
<div style="left:458px;top:395px;width:947px;height:1px;background:#3b97fb;"></div>
<div style="left:458px;top:417px;width:947px;height:1px;background:#3b97fb;"></div>
<div style="left:458px;top:395px;width:1px;height:23px;background:#3b97fb;"></div>
<div style="left:1439px;top:395px;width:1px;height:23px;background:#3b97fb;"></div>
<div style="left:495px;top:396px;width:18px;height:20px;background:#3b97fb;"></div>
<div style="left:909px;top:396px;width:18px;height:20px;background:#3b97fb;"></div>
<div style="left:459px;top:396px;width:36px;height:20px;background:#f0f0f0;border:1px solid #a4a7ac;"></div>
<div style="left:513px;top:396px;width:181px;height:20px;background:#f0f0f0;border:1px solid #a4a7ac;"></div>
<div style="left:693px;top:396px;width:91px;height:20px;background:#fff;border:1px solid #a4a7ac;"></div>
<div style="left:784px;top:396px;width:89px;height:20px;background:#f0f0f0;border:1px solid #a4a7ac;"></div>
<div style="left:874px;top:396px;width:35px;height:20px;background:#f0f0f0;border:1px solid #a4a7ac;"></div>
<div style="left:927px;top:396px;width:180px;height:20px;background:#f0f0f0;border:1px solid #a4a7ac;"></div>
<div style="left:1107px;top:396px;width:90px;height:20px;background:#ffff99;border:1px solid #a4a7ac;"></div>
<div style="left:1197px;top:396px;width:207px;height:20px;background:#f0f0f0;border:1px solid #a4a7ac;"></div>
<div style="left:1405px;top:397px;width:33px;height:19px;background:#e1e1e1;border:1px solid #adadad;"></div>
<div class="t" style="left:1413.85px;top:401.69px;font-size:11px;line-height:13px;color:#000;transform-origin:0 0;transform:scaleX(1.4694);-webkit-text-stroke:0.08px #000;">...</div>
<svg style="left:497px;top:399px" width="14" height="14" viewBox="0 0 14 14"><rect x="0" y="0" width="14" height="14" rx="1.8" fill="#1e9bff"/><rect x="1.5" y="1" width="11" height="1" fill="#86ccff"/><rect x="1" y="3" width="12" height="10" fill="#ece8fb"/><path d="M8.8 9.6 L12.4 13" stroke="#f39a1e" stroke-width="2.2"/><path d="M9.6 10 l2.4 2.3" stroke="#ffe27a" stroke-width=".8" stroke-dasharray="1 1"/><circle cx="6.2" cy="7.4" r="3.1" fill="#a9dcf7" stroke="#707070" stroke-width="1.2"/><circle cx="5.5" cy="6.7" r="1.2" fill="#d9f1fd"/></svg>
<svg style="left:911px;top:399px" width="14" height="14" viewBox="0 0 14 14"><rect x="0" y="0" width="14" height="14" rx="1.8" fill="#1e9bff"/><rect x="1.5" y="1" width="11" height="1" fill="#86ccff"/><rect x="1" y="3" width="12" height="10" fill="#ece8fb"/><path d="M8.8 9.6 L12.4 13" stroke="#f39a1e" stroke-width="2.2"/><path d="M9.6 10 l2.4 2.3" stroke="#ffe27a" stroke-width=".8" stroke-dasharray="1 1"/><circle cx="6.2" cy="7.4" r="3.1" fill="#a9dcf7" stroke="#707070" stroke-width="1.2"/><circle cx="5.5" cy="6.7" r="1.2" fill="#d9f1fd"/></svg>
<div class="t" style="left:480.00px;top:399.69px;font-size:11px;line-height:13px;color:#000;transform-origin:0 0;transform:scaleX(0.9796);-webkit-text-stroke:0.08px #000;">13</div>
<div class="t" style="left:513.50px;top:399.69px;font-size:11px;line-height:13px;color:#000;transform-origin:0 0;transform:scaleX(0.9435);-webkit-text-stroke:0.08px #000;">VIRAR TIRAS</div>
<div class="t" style="left:734.50px;top:399.69px;font-size:11px;line-height:13px;color:#000;transform-origin:0 0;transform:scaleX(0.9796);-webkit-text-stroke:0.08px #000;">4,000000</div>
<div class="t" style="left:836.00px;top:399.69px;font-size:11px;line-height:13px;color:#000;transform-origin:0 0;transform:scaleX(0.9796);-webkit-text-stroke:0.08px #000;">96,000</div>
<div class="t" style="left:900.00px;top:399.69px;font-size:11px;line-height:13px;color:#000;transform-origin:0 0;transform:scaleX(0.9796);-webkit-text-stroke:0.08px #000;">5</div>
<div class="t" style="left:927.50px;top:399.69px;font-size:11px;line-height:13px;color:#000;transform-origin:0 0;transform:scaleX(0.9435);-webkit-text-stroke:0.08px #000;">VIRAR TIRAS</div>
<div style="left:1154px;top:398px;width:40px;height:15px;background:#0078d7;"></div>
<div class="t" style="left:1154.00px;top:399.69px;font-size:11px;line-height:13px;color:#fff;transform-origin:0 0;transform:scaleX(0.9796);-webkit-text-stroke:0.08px #fff;">250,000</div>
<div style="left:1194px;top:398px;width:1px;height:15px;background:#000;"></div>
<div class="t" style="left:1196.80px;top:399.69px;font-size:11px;line-height:13px;color:#000;transform-origin:0 0;transform:scaleX(1.0250);-webkit-text-stroke:0.08px #000;">Variável - 0:02:06,72</div>
<div style="left:459px;top:418px;width:36px;height:20px;background:#f0f0f0;border:1px solid #a4a7ac;"></div>
<div style="left:513px;top:418px;width:181px;height:20px;background:#f0f0f0;border:1px solid #a4a7ac;"></div>
<div style="left:693px;top:418px;width:91px;height:20px;background:#fff;border:1px solid #a4a7ac;"></div>
<div style="left:784px;top:418px;width:89px;height:20px;background:#f0f0f0;border:1px solid #a4a7ac;"></div>
<div style="left:874px;top:418px;width:35px;height:20px;background:#f0f0f0;border:1px solid #a4a7ac;"></div>
<div style="left:927px;top:418px;width:180px;height:20px;background:#f0f0f0;border:1px solid #a4a7ac;"></div>
<div style="left:1107px;top:418px;width:90px;height:20px;background:#fff;border:1px solid #a4a7ac;"></div>
<div style="left:1197px;top:418px;width:207px;height:20px;background:#f0f0f0;border:1px solid #a4a7ac;"></div>
<div style="left:1405px;top:419px;width:33px;height:19px;background:#e1e1e1;border:1px solid #adadad;"></div>
<div class="t" style="left:1413.85px;top:423.69px;font-size:11px;line-height:13px;color:#000;transform-origin:0 0;transform:scaleX(1.4694);-webkit-text-stroke:0.08px #000;">...</div>
<svg style="left:497px;top:421px" width="14" height="14" viewBox="0 0 14 14"><rect x="0" y="0" width="14" height="14" rx="1.8" fill="#1e9bff"/><rect x="1.5" y="1" width="11" height="1" fill="#86ccff"/><rect x="1" y="3" width="12" height="10" fill="#ece8fb"/><path d="M8.8 9.6 L12.4 13" stroke="#f39a1e" stroke-width="2.2"/><path d="M9.6 10 l2.4 2.3" stroke="#ffe27a" stroke-width=".8" stroke-dasharray="1 1"/><circle cx="6.2" cy="7.4" r="3.1" fill="#a9dcf7" stroke="#707070" stroke-width="1.2"/><circle cx="5.5" cy="6.7" r="1.2" fill="#d9f1fd"/></svg>
<svg style="left:911px;top:421px" width="14" height="14" viewBox="0 0 14 14"><rect x="0" y="0" width="14" height="14" rx="1.8" fill="#1e9bff"/><rect x="1.5" y="1" width="11" height="1" fill="#86ccff"/><rect x="1" y="3" width="12" height="10" fill="#ece8fb"/><path d="M8.8 9.6 L12.4 13" stroke="#f39a1e" stroke-width="2.2"/><path d="M9.6 10 l2.4 2.3" stroke="#ffe27a" stroke-width=".8" stroke-dasharray="1 1"/><circle cx="6.2" cy="7.4" r="3.1" fill="#a9dcf7" stroke="#707070" stroke-width="1.2"/><circle cx="5.5" cy="6.7" r="1.2" fill="#d9f1fd"/></svg>
<div class="t" style="left:480.00px;top:421.69px;font-size:11px;line-height:13px;color:#000;transform-origin:0 0;transform:scaleX(0.9796);-webkit-text-stroke:0.08px #000;">14</div>
<div class="t" style="left:513.50px;top:421.69px;font-size:11px;line-height:13px;color:#000;transform-origin:0 0;transform:scaleX(0.9103);-webkit-text-stroke:0.08px #000;">COSTURA PALMILHA</div>
<div class="t" style="left:734.50px;top:421.69px;font-size:11px;line-height:13px;color:#000;transform-origin:0 0;transform:scaleX(0.9796);-webkit-text-stroke:0.08px #000;">4,000000</div>
<div class="t" style="left:836.00px;top:421.69px;font-size:11px;line-height:13px;color:#000;transform-origin:0 0;transform:scaleX(0.9796);-webkit-text-stroke:0.08px #000;">96,000</div>
<div class="t" style="left:900.00px;top:421.69px;font-size:11px;line-height:13px;color:#000;transform-origin:0 0;transform:scaleX(0.9796);-webkit-text-stroke:0.08px #000;">7</div>
<div class="t" style="left:927.50px;top:421.69px;font-size:11px;line-height:13px;color:#000;transform-origin:0 0;transform:scaleX(0.9072);-webkit-text-stroke:0.08px #000;">COSTURA PALMILH</div>
<div class="t" style="left:1154.00px;top:421.69px;font-size:11px;line-height:13px;color:#000;transform-origin:0 0;transform:scaleX(0.9796);-webkit-text-stroke:0.08px #000;">250,000</div>
<div class="t" style="left:1196.80px;top:421.69px;font-size:11px;line-height:13px;color:#000;transform-origin:0 0;transform:scaleX(1.0250);-webkit-text-stroke:0.08px #000;">Variável - 0:02:06,72</div>
<div style="left:459px;top:440px;width:36px;height:20px;background:#f0f0f0;border:1px solid #a4a7ac;"></div>
<div style="left:513px;top:440px;width:181px;height:20px;background:#f0f0f0;border:1px solid #a4a7ac;"></div>
<div style="left:693px;top:440px;width:91px;height:20px;background:#fff;border:1px solid #a4a7ac;"></div>
<div style="left:784px;top:440px;width:89px;height:20px;background:#f0f0f0;border:1px solid #a4a7ac;"></div>
<div style="left:874px;top:440px;width:35px;height:20px;background:#f0f0f0;border:1px solid #a4a7ac;"></div>
<div style="left:927px;top:440px;width:180px;height:20px;background:#f0f0f0;border:1px solid #a4a7ac;"></div>
<div style="left:1107px;top:440px;width:90px;height:20px;background:#fff;border:1px solid #a4a7ac;"></div>
<div style="left:1197px;top:440px;width:207px;height:20px;background:#f0f0f0;border:1px solid #a4a7ac;"></div>
<div style="left:1405px;top:441px;width:33px;height:19px;background:#e1e1e1;border:1px solid #adadad;"></div>
<div class="t" style="left:1413.85px;top:445.69px;font-size:11px;line-height:13px;color:#000;transform-origin:0 0;transform:scaleX(1.4694);-webkit-text-stroke:0.08px #000;">...</div>
<svg style="left:497px;top:443px" width="14" height="14" viewBox="0 0 14 14"><rect x="0" y="0" width="14" height="14" rx="1.8" fill="#1e9bff"/><rect x="1.5" y="1" width="11" height="1" fill="#86ccff"/><rect x="1" y="3" width="12" height="10" fill="#ece8fb"/><path d="M8.8 9.6 L12.4 13" stroke="#f39a1e" stroke-width="2.2"/><path d="M9.6 10 l2.4 2.3" stroke="#ffe27a" stroke-width=".8" stroke-dasharray="1 1"/><circle cx="6.2" cy="7.4" r="3.1" fill="#a9dcf7" stroke="#707070" stroke-width="1.2"/><circle cx="5.5" cy="6.7" r="1.2" fill="#d9f1fd"/></svg>
<svg style="left:911px;top:443px" width="14" height="14" viewBox="0 0 14 14"><rect x="0" y="0" width="14" height="14" rx="1.8" fill="#1e9bff"/><rect x="1.5" y="1" width="11" height="1" fill="#86ccff"/><rect x="1" y="3" width="12" height="10" fill="#ece8fb"/><path d="M8.8 9.6 L12.4 13" stroke="#f39a1e" stroke-width="2.2"/><path d="M9.6 10 l2.4 2.3" stroke="#ffe27a" stroke-width=".8" stroke-dasharray="1 1"/><circle cx="6.2" cy="7.4" r="3.1" fill="#a9dcf7" stroke="#707070" stroke-width="1.2"/><circle cx="5.5" cy="6.7" r="1.2" fill="#d9f1fd"/></svg>
<div class="t" style="left:486.00px;top:443.69px;font-size:11px;line-height:13px;color:#000;transform-origin:0 0;transform:scaleX(0.9796);-webkit-text-stroke:0.08px #000;">3</div>
<div class="t" style="left:513.50px;top:443.69px;font-size:11px;line-height:13px;color:#000;transform-origin:0 0;transform:scaleX(0.8925);-webkit-text-stroke:0.08px #000;">COSTURA</div>
<div class="t" style="left:734.50px;top:443.69px;font-size:11px;line-height:13px;color:#000;transform-origin:0 0;transform:scaleX(0.9796);-webkit-text-stroke:0.08px #000;">3,000000</div>
<div class="t" style="left:836.00px;top:443.69px;font-size:11px;line-height:13px;color:#000;transform-origin:0 0;transform:scaleX(0.9796);-webkit-text-stroke:0.08px #000;">72,000</div>
<div class="t" style="left:900.00px;top:443.69px;font-size:11px;line-height:13px;color:#000;transform-origin:0 0;transform:scaleX(0.9796);-webkit-text-stroke:0.08px #000;">6</div>
<div class="t" style="left:927.50px;top:443.69px;font-size:11px;line-height:13px;color:#000;transform-origin:0 0;transform:scaleX(0.8925);-webkit-text-stroke:0.08px #000;">COSTURA</div>
<div class="t" style="left:1154.00px;top:443.69px;font-size:11px;line-height:13px;color:#000;transform-origin:0 0;transform:scaleX(0.9796);-webkit-text-stroke:0.08px #000;">250,000</div>
<div class="t" style="left:1196.80px;top:443.69px;font-size:11px;line-height:13px;color:#000;transform-origin:0 0;transform:scaleX(1.0250);-webkit-text-stroke:0.08px #000;">Variável - 0:02:06,72</div>
<div style="left:459px;top:462px;width:36px;height:20px;background:#f0f0f0;border:1px solid #a4a7ac;"></div>
<div style="left:513px;top:462px;width:181px;height:20px;background:#f0f0f0;border:1px solid #a4a7ac;"></div>
<div style="left:693px;top:462px;width:91px;height:20px;background:#fff;border:1px solid #a4a7ac;"></div>
<div style="left:784px;top:462px;width:89px;height:20px;background:#f0f0f0;border:1px solid #a4a7ac;"></div>
<div style="left:874px;top:462px;width:35px;height:20px;background:#f0f0f0;border:1px solid #a4a7ac;"></div>
<div style="left:927px;top:462px;width:180px;height:20px;background:#f0f0f0;border:1px solid #a4a7ac;"></div>
<div style="left:1107px;top:462px;width:90px;height:20px;background:#fff;border:1px solid #a4a7ac;"></div>
<div style="left:1197px;top:462px;width:207px;height:20px;background:#f0f0f0;border:1px solid #a4a7ac;"></div>
<div style="left:1405px;top:463px;width:33px;height:19px;background:#e1e1e1;border:1px solid #adadad;"></div>
<div class="t" style="left:1413.85px;top:467.69px;font-size:11px;line-height:13px;color:#000;transform-origin:0 0;transform:scaleX(1.4694);-webkit-text-stroke:0.08px #000;">...</div>
<svg style="left:497px;top:465px" width="14" height="14" viewBox="0 0 14 14"><rect x="0" y="0" width="14" height="14" rx="1.8" fill="#1e9bff"/><rect x="1.5" y="1" width="11" height="1" fill="#86ccff"/><rect x="1" y="3" width="12" height="10" fill="#ece8fb"/><path d="M8.8 9.6 L12.4 13" stroke="#f39a1e" stroke-width="2.2"/><path d="M9.6 10 l2.4 2.3" stroke="#ffe27a" stroke-width=".8" stroke-dasharray="1 1"/><circle cx="6.2" cy="7.4" r="3.1" fill="#a9dcf7" stroke="#707070" stroke-width="1.2"/><circle cx="5.5" cy="6.7" r="1.2" fill="#d9f1fd"/></svg>
<svg style="left:911px;top:465px" width="14" height="14" viewBox="0 0 14 14"><rect x="0" y="0" width="14" height="14" rx="1.8" fill="#1e9bff"/><rect x="1.5" y="1" width="11" height="1" fill="#86ccff"/><rect x="1" y="3" width="12" height="10" fill="#ece8fb"/><path d="M8.8 9.6 L12.4 13" stroke="#f39a1e" stroke-width="2.2"/><path d="M9.6 10 l2.4 2.3" stroke="#ffe27a" stroke-width=".8" stroke-dasharray="1 1"/><circle cx="6.2" cy="7.4" r="3.1" fill="#a9dcf7" stroke="#707070" stroke-width="1.2"/><circle cx="5.5" cy="6.7" r="1.2" fill="#d9f1fd"/></svg>
<div class="t" style="left:480.00px;top:465.69px;font-size:11px;line-height:13px;color:#000;transform-origin:0 0;transform:scaleX(0.9796);-webkit-text-stroke:0.08px #000;">16</div>
<div class="t" style="left:513.50px;top:465.69px;font-size:11px;line-height:13px;color:#000;transform-origin:0 0;transform:scaleX(0.9004);-webkit-text-stroke:0.08px #000;">APLICAR ENFEITE</div>
<div class="t" style="left:734.50px;top:465.69px;font-size:11px;line-height:13px;color:#000;transform-origin:0 0;transform:scaleX(0.9796);-webkit-text-stroke:0.08px #000;">3,000000</div>
<div class="t" style="left:836.00px;top:465.69px;font-size:11px;line-height:13px;color:#000;transform-origin:0 0;transform:scaleX(0.9796);-webkit-text-stroke:0.08px #000;">72,000</div>
<div class="t" style="left:900.00px;top:465.69px;font-size:11px;line-height:13px;color:#000;transform-origin:0 0;transform:scaleX(0.9796);-webkit-text-stroke:0.08px #000;">9</div>
<div class="t" style="left:927.50px;top:465.69px;font-size:11px;line-height:13px;color:#000;transform-origin:0 0;transform:scaleX(0.9004);-webkit-text-stroke:0.08px #000;">APLICAR ENFEITE</div>
<div class="t" style="left:1154.00px;top:465.69px;font-size:11px;line-height:13px;color:#000;transform-origin:0 0;transform:scaleX(0.9796);-webkit-text-stroke:0.08px #000;">250,000</div>
<div class="t" style="left:1196.80px;top:465.69px;font-size:11px;line-height:13px;color:#000;transform-origin:0 0;transform:scaleX(1.0250);-webkit-text-stroke:0.08px #000;">Variável - 0:02:06,72</div>
<div style="left:459px;top:484px;width:36px;height:20px;background:#f0f0f0;border:1px solid #a4a7ac;"></div>
<div style="left:513px;top:484px;width:181px;height:20px;background:#f0f0f0;border:1px solid #a4a7ac;"></div>
<div style="left:693px;top:484px;width:91px;height:20px;background:#fff;border:1px solid #a4a7ac;"></div>
<div style="left:784px;top:484px;width:89px;height:20px;background:#f0f0f0;border:1px solid #a4a7ac;"></div>
<div style="left:874px;top:484px;width:35px;height:20px;background:#f0f0f0;border:1px solid #a4a7ac;"></div>
<div style="left:927px;top:484px;width:180px;height:20px;background:#f0f0f0;border:1px solid #a4a7ac;"></div>
<div style="left:1107px;top:484px;width:90px;height:20px;background:#fff;border:1px solid #a4a7ac;"></div>
<div style="left:1197px;top:484px;width:207px;height:20px;background:#f0f0f0;border:1px solid #a4a7ac;"></div>
<div style="left:1405px;top:485px;width:33px;height:19px;background:#e1e1e1;border:1px solid #adadad;"></div>
<div class="t" style="left:1413.85px;top:489.69px;font-size:11px;line-height:13px;color:#000;transform-origin:0 0;transform:scaleX(1.4694);-webkit-text-stroke:0.08px #000;">...</div>
<svg style="left:497px;top:487px" width="14" height="14" viewBox="0 0 14 14"><rect x="0" y="0" width="14" height="14" rx="1.8" fill="#1e9bff"/><rect x="1.5" y="1" width="11" height="1" fill="#86ccff"/><rect x="1" y="3" width="12" height="10" fill="#ece8fb"/><path d="M8.8 9.6 L12.4 13" stroke="#f39a1e" stroke-width="2.2"/><path d="M9.6 10 l2.4 2.3" stroke="#ffe27a" stroke-width=".8" stroke-dasharray="1 1"/><circle cx="6.2" cy="7.4" r="3.1" fill="#a9dcf7" stroke="#707070" stroke-width="1.2"/><circle cx="5.5" cy="6.7" r="1.2" fill="#d9f1fd"/></svg>
<svg style="left:911px;top:487px" width="14" height="14" viewBox="0 0 14 14"><rect x="0" y="0" width="14" height="14" rx="1.8" fill="#1e9bff"/><rect x="1.5" y="1" width="11" height="1" fill="#86ccff"/><rect x="1" y="3" width="12" height="10" fill="#ece8fb"/><path d="M8.8 9.6 L12.4 13" stroke="#f39a1e" stroke-width="2.2"/><path d="M9.6 10 l2.4 2.3" stroke="#ffe27a" stroke-width=".8" stroke-dasharray="1 1"/><circle cx="6.2" cy="7.4" r="3.1" fill="#a9dcf7" stroke="#707070" stroke-width="1.2"/><circle cx="5.5" cy="6.7" r="1.2" fill="#d9f1fd"/></svg>
<div class="t" style="left:480.00px;top:487.69px;font-size:11px;line-height:13px;color:#000;transform-origin:0 0;transform:scaleX(1.0492);-webkit-text-stroke:0.08px #000;">11</div>
<div class="t" style="left:513.50px;top:487.69px;font-size:11px;line-height:13px;color:#000;transform-origin:0 0;transform:scaleX(0.9138);-webkit-text-stroke:0.08px #000;">PALMILHA</div>
<div class="t" style="left:734.50px;top:487.69px;font-size:11px;line-height:13px;color:#000;transform-origin:0 0;transform:scaleX(0.9796);-webkit-text-stroke:0.08px #000;">2,000000</div>
<div class="t" style="left:836.00px;top:487.69px;font-size:11px;line-height:13px;color:#000;transform-origin:0 0;transform:scaleX(0.9796);-webkit-text-stroke:0.08px #000;">48,000</div>
<div class="t" style="left:900.00px;top:487.69px;font-size:11px;line-height:13px;color:#000;transform-origin:0 0;transform:scaleX(0.9796);-webkit-text-stroke:0.08px #000;">4</div>
<div class="t" style="left:927.50px;top:487.69px;font-size:11px;line-height:13px;color:#000;transform-origin:0 0;transform:scaleX(0.9223);-webkit-text-stroke:0.08px #000;">PALMILHA FORADA</div>
<div class="t" style="left:1154.00px;top:487.69px;font-size:11px;line-height:13px;color:#000;transform-origin:0 0;transform:scaleX(0.9796);-webkit-text-stroke:0.08px #000;">250,000</div>
<div class="t" style="left:1196.80px;top:487.69px;font-size:11px;line-height:13px;color:#000;transform-origin:0 0;transform:scaleX(1.0250);-webkit-text-stroke:0.08px #000;">Variável - 0:02:06,72</div>
<div style="left:459px;top:506px;width:36px;height:20px;background:#f0f0f0;border:1px solid #a4a7ac;"></div>
<div style="left:513px;top:506px;width:181px;height:20px;background:#f0f0f0;border:1px solid #a4a7ac;"></div>
<div style="left:693px;top:506px;width:91px;height:20px;background:#fff;border:1px solid #a4a7ac;"></div>
<div style="left:784px;top:506px;width:89px;height:20px;background:#f0f0f0;border:1px solid #a4a7ac;"></div>
<div style="left:874px;top:506px;width:35px;height:20px;background:#f0f0f0;border:1px solid #a4a7ac;"></div>
<div style="left:927px;top:506px;width:180px;height:20px;background:#f0f0f0;border:1px solid #a4a7ac;"></div>
<div style="left:1107px;top:506px;width:90px;height:20px;background:#fff;border:1px solid #a4a7ac;"></div>
<div style="left:1197px;top:506px;width:207px;height:20px;background:#f0f0f0;border:1px solid #a4a7ac;"></div>
<div style="left:1405px;top:507px;width:33px;height:19px;background:#e1e1e1;border:1px solid #adadad;"></div>
<div class="t" style="left:1413.85px;top:511.69px;font-size:11px;line-height:13px;color:#000;transform-origin:0 0;transform:scaleX(1.4694);-webkit-text-stroke:0.08px #000;">...</div>
<svg style="left:497px;top:509px" width="14" height="14" viewBox="0 0 14 14"><rect x="0" y="0" width="14" height="14" rx="1.8" fill="#1e9bff"/><rect x="1.5" y="1" width="11" height="1" fill="#86ccff"/><rect x="1" y="3" width="12" height="10" fill="#ece8fb"/><path d="M8.8 9.6 L12.4 13" stroke="#f39a1e" stroke-width="2.2"/><path d="M9.6 10 l2.4 2.3" stroke="#ffe27a" stroke-width=".8" stroke-dasharray="1 1"/><circle cx="6.2" cy="7.4" r="3.1" fill="#a9dcf7" stroke="#707070" stroke-width="1.2"/><circle cx="5.5" cy="6.7" r="1.2" fill="#d9f1fd"/></svg>
<svg style="left:911px;top:509px" width="14" height="14" viewBox="0 0 14 14"><rect x="0" y="0" width="14" height="14" rx="1.8" fill="#1e9bff"/><rect x="1.5" y="1" width="11" height="1" fill="#86ccff"/><rect x="1" y="3" width="12" height="10" fill="#ece8fb"/><path d="M8.8 9.6 L12.4 13" stroke="#f39a1e" stroke-width="2.2"/><path d="M9.6 10 l2.4 2.3" stroke="#ffe27a" stroke-width=".8" stroke-dasharray="1 1"/><circle cx="6.2" cy="7.4" r="3.1" fill="#a9dcf7" stroke="#707070" stroke-width="1.2"/><circle cx="5.5" cy="6.7" r="1.2" fill="#d9f1fd"/></svg>
<div class="t" style="left:480.00px;top:509.69px;font-size:11px;line-height:13px;color:#000;transform-origin:0 0;transform:scaleX(0.9796);-webkit-text-stroke:0.08px #000;">23</div>
<div class="t" style="left:513.50px;top:509.69px;font-size:11px;line-height:13px;color:#000;transform-origin:0 0;transform:scaleX(0.8920);-webkit-text-stroke:0.08px #000;">FORRAÇÃO DE SALTO</div>
<div class="t" style="left:734.50px;top:509.69px;font-size:11px;line-height:13px;color:#000;transform-origin:0 0;transform:scaleX(0.9796);-webkit-text-stroke:0.08px #000;">2,000000</div>
<div class="t" style="left:836.00px;top:509.69px;font-size:11px;line-height:13px;color:#000;transform-origin:0 0;transform:scaleX(0.9796);-webkit-text-stroke:0.08px #000;">48,000</div>
<div class="t" style="left:894.00px;top:509.69px;font-size:11px;line-height:13px;color:#000;transform-origin:0 0;transform:scaleX(0.9796);-webkit-text-stroke:0.08px #000;">16</div>
<div class="t" style="left:927.50px;top:509.69px;font-size:11px;line-height:13px;color:#000;transform-origin:0 0;transform:scaleX(0.9193);-webkit-text-stroke:0.08px #000;">FORRAR SALTO / CEPA</div>
<div class="t" style="left:1154.00px;top:509.69px;font-size:11px;line-height:13px;color:#000;transform-origin:0 0;transform:scaleX(0.9796);-webkit-text-stroke:0.08px #000;">250,000</div>
<div class="t" style="left:1196.80px;top:509.69px;font-size:11px;line-height:13px;color:#000;transform-origin:0 0;transform:scaleX(1.0250);-webkit-text-stroke:0.08px #000;">Variável - 0:02:06,72</div>
<div style="left:459px;top:528px;width:36px;height:20px;background:#f0f0f0;border:1px solid #a4a7ac;"></div>
<div style="left:513px;top:528px;width:181px;height:20px;background:#f0f0f0;border:1px solid #a4a7ac;"></div>
<div style="left:693px;top:528px;width:91px;height:20px;background:#fff;border:1px solid #a4a7ac;"></div>
<div style="left:784px;top:528px;width:89px;height:20px;background:#f0f0f0;border:1px solid #a4a7ac;"></div>
<div style="left:874px;top:528px;width:35px;height:20px;background:#f0f0f0;border:1px solid #a4a7ac;"></div>
<div style="left:927px;top:528px;width:180px;height:20px;background:#f0f0f0;border:1px solid #a4a7ac;"></div>
<div style="left:1107px;top:528px;width:90px;height:20px;background:#fff;border:1px solid #a4a7ac;"></div>
<div style="left:1197px;top:528px;width:207px;height:20px;background:#f0f0f0;border:1px solid #a4a7ac;"></div>
<div style="left:1405px;top:529px;width:33px;height:19px;background:#e1e1e1;border:1px solid #adadad;"></div>
<div class="t" style="left:1413.85px;top:533.69px;font-size:11px;line-height:13px;color:#000;transform-origin:0 0;transform:scaleX(1.4694);-webkit-text-stroke:0.08px #000;">...</div>
<svg style="left:497px;top:531px" width="14" height="14" viewBox="0 0 14 14"><rect x="0" y="0" width="14" height="14" rx="1.8" fill="#1e9bff"/><rect x="1.5" y="1" width="11" height="1" fill="#86ccff"/><rect x="1" y="3" width="12" height="10" fill="#ece8fb"/><path d="M8.8 9.6 L12.4 13" stroke="#f39a1e" stroke-width="2.2"/><path d="M9.6 10 l2.4 2.3" stroke="#ffe27a" stroke-width=".8" stroke-dasharray="1 1"/><circle cx="6.2" cy="7.4" r="3.1" fill="#a9dcf7" stroke="#707070" stroke-width="1.2"/><circle cx="5.5" cy="6.7" r="1.2" fill="#d9f1fd"/></svg>
<svg style="left:911px;top:531px" width="14" height="14" viewBox="0 0 14 14"><rect x="0" y="0" width="14" height="14" rx="1.8" fill="#1e9bff"/><rect x="1.5" y="1" width="11" height="1" fill="#86ccff"/><rect x="1" y="3" width="12" height="10" fill="#ece8fb"/><path d="M8.8 9.6 L12.4 13" stroke="#f39a1e" stroke-width="2.2"/><path d="M9.6 10 l2.4 2.3" stroke="#ffe27a" stroke-width=".8" stroke-dasharray="1 1"/><circle cx="6.2" cy="7.4" r="3.1" fill="#a9dcf7" stroke="#707070" stroke-width="1.2"/><circle cx="5.5" cy="6.7" r="1.2" fill="#d9f1fd"/></svg>
<div class="t" style="left:486.00px;top:531.69px;font-size:11px;line-height:13px;color:#000;transform-origin:0 0;transform:scaleX(0.9796);-webkit-text-stroke:0.08px #000;">7</div>
<div class="t" style="left:513.50px;top:531.69px;font-size:11px;line-height:13px;color:#000;transform-origin:0 0;transform:scaleX(0.9074);-webkit-text-stroke:0.08px #000;">PRÉ FABRICADO</div>
<div class="t" style="left:734.50px;top:531.69px;font-size:11px;line-height:13px;color:#000;transform-origin:0 0;transform:scaleX(0.9796);-webkit-text-stroke:0.08px #000;">1,000000</div>
<div class="t" style="left:836.00px;top:531.69px;font-size:11px;line-height:13px;color:#000;transform-origin:0 0;transform:scaleX(0.9796);-webkit-text-stroke:0.08px #000;">24,000</div>
<div class="t" style="left:900.00px;top:531.69px;font-size:11px;line-height:13px;color:#000;transform-origin:0 0;transform:scaleX(0.9796);-webkit-text-stroke:0.08px #000;">1</div>
<div class="t" style="left:927.50px;top:531.69px;font-size:11px;line-height:13px;color:#000;transform-origin:0 0;transform:scaleX(0.8576);-webkit-text-stroke:0.08px #000;">GERAL</div>
<div class="t" style="left:1154.00px;top:531.69px;font-size:11px;line-height:13px;color:#000;transform-origin:0 0;transform:scaleX(0.9796);-webkit-text-stroke:0.08px #000;">250,000</div>
<div class="t" style="left:1196.80px;top:531.69px;font-size:11px;line-height:13px;color:#000;transform-origin:0 0;transform:scaleX(1.0250);-webkit-text-stroke:0.08px #000;">Variável - 0:02:06,72</div>
<div style="left:459px;top:550px;width:36px;height:20px;background:#f0f0f0;border:1px solid #a4a7ac;"></div>
<div style="left:513px;top:550px;width:181px;height:20px;background:#f0f0f0;border:1px solid #a4a7ac;"></div>
<div style="left:693px;top:550px;width:91px;height:20px;background:#fff;border:1px solid #a4a7ac;"></div>
<div style="left:784px;top:550px;width:89px;height:20px;background:#f0f0f0;border:1px solid #a4a7ac;"></div>
<div style="left:874px;top:550px;width:35px;height:20px;background:#f0f0f0;border:1px solid #a4a7ac;"></div>
<div style="left:927px;top:550px;width:180px;height:20px;background:#f0f0f0;border:1px solid #a4a7ac;"></div>
<div style="left:1107px;top:550px;width:90px;height:20px;background:#fff;border:1px solid #a4a7ac;"></div>
<div style="left:1197px;top:550px;width:207px;height:20px;background:#f0f0f0;border:1px solid #a4a7ac;"></div>
<div style="left:1405px;top:551px;width:33px;height:19px;background:#e1e1e1;border:1px solid #adadad;"></div>
<div class="t" style="left:1413.85px;top:555.69px;font-size:11px;line-height:13px;color:#000;transform-origin:0 0;transform:scaleX(1.4694);-webkit-text-stroke:0.08px #000;">...</div>
<svg style="left:497px;top:553px" width="14" height="14" viewBox="0 0 14 14"><rect x="0" y="0" width="14" height="14" rx="1.8" fill="#1e9bff"/><rect x="1.5" y="1" width="11" height="1" fill="#86ccff"/><rect x="1" y="3" width="12" height="10" fill="#ece8fb"/><path d="M8.8 9.6 L12.4 13" stroke="#f39a1e" stroke-width="2.2"/><path d="M9.6 10 l2.4 2.3" stroke="#ffe27a" stroke-width=".8" stroke-dasharray="1 1"/><circle cx="6.2" cy="7.4" r="3.1" fill="#a9dcf7" stroke="#707070" stroke-width="1.2"/><circle cx="5.5" cy="6.7" r="1.2" fill="#d9f1fd"/></svg>
<svg style="left:911px;top:553px" width="14" height="14" viewBox="0 0 14 14"><rect x="0" y="0" width="14" height="14" rx="1.8" fill="#1e9bff"/><rect x="1.5" y="1" width="11" height="1" fill="#86ccff"/><rect x="1" y="3" width="12" height="10" fill="#ece8fb"/><path d="M8.8 9.6 L12.4 13" stroke="#f39a1e" stroke-width="2.2"/><path d="M9.6 10 l2.4 2.3" stroke="#ffe27a" stroke-width=".8" stroke-dasharray="1 1"/><circle cx="6.2" cy="7.4" r="3.1" fill="#a9dcf7" stroke="#707070" stroke-width="1.2"/><circle cx="5.5" cy="6.7" r="1.2" fill="#d9f1fd"/></svg>
<div class="t" style="left:486.00px;top:553.69px;font-size:11px;line-height:13px;color:#000;transform-origin:0 0;transform:scaleX(0.9796);-webkit-text-stroke:0.08px #000;">4</div>
<div class="t" style="left:513.50px;top:553.69px;font-size:11px;line-height:13px;color:#000;transform-origin:0 0;transform:scaleX(0.8911);-webkit-text-stroke:0.08px #000;">MONTAGEM</div>
<div class="t" style="left:900.00px;top:553.69px;font-size:11px;line-height:13px;color:#000;transform-origin:0 0;transform:scaleX(0.9796);-webkit-text-stroke:0.08px #000;">1</div>
<div class="t" style="left:927.50px;top:553.69px;font-size:11px;line-height:13px;color:#000;transform-origin:0 0;transform:scaleX(0.8576);-webkit-text-stroke:0.08px #000;">GERAL</div>
<div class="t" style="left:1154.00px;top:553.69px;font-size:11px;line-height:13px;color:#000;transform-origin:0 0;transform:scaleX(0.9796);-webkit-text-stroke:0.08px #000;">250,000</div>
<div class="t" style="left:1196.80px;top:553.69px;font-size:11px;line-height:13px;color:#000;transform-origin:0 0;transform:scaleX(1.0250);-webkit-text-stroke:0.08px #000;">Variável - 0:02:06,72</div>
<div style="left:459px;top:572px;width:36px;height:20px;background:#f0f0f0;border:1px solid #a4a7ac;"></div>
<div style="left:513px;top:572px;width:181px;height:20px;background:#f0f0f0;border:1px solid #a4a7ac;"></div>
<div style="left:693px;top:572px;width:91px;height:20px;background:#fff;border:1px solid #a4a7ac;"></div>
<div style="left:784px;top:572px;width:89px;height:20px;background:#f0f0f0;border:1px solid #a4a7ac;"></div>
<div style="left:874px;top:572px;width:35px;height:20px;background:#f0f0f0;border:1px solid #a4a7ac;"></div>
<div style="left:927px;top:572px;width:180px;height:20px;background:#f0f0f0;border:1px solid #a4a7ac;"></div>
<div style="left:1107px;top:572px;width:90px;height:20px;background:#fff;border:1px solid #a4a7ac;"></div>
<div style="left:1197px;top:572px;width:207px;height:20px;background:#f0f0f0;border:1px solid #a4a7ac;"></div>
<div style="left:1405px;top:573px;width:33px;height:19px;background:#e1e1e1;border:1px solid #adadad;"></div>
<div class="t" style="left:1413.85px;top:577.69px;font-size:11px;line-height:13px;color:#000;transform-origin:0 0;transform:scaleX(1.4694);-webkit-text-stroke:0.08px #000;">...</div>
<svg style="left:497px;top:575px" width="14" height="14" viewBox="0 0 14 14"><rect x="0" y="0" width="14" height="14" rx="1.8" fill="#1e9bff"/><rect x="1.5" y="1" width="11" height="1" fill="#86ccff"/><rect x="1" y="3" width="12" height="10" fill="#ece8fb"/><path d="M8.8 9.6 L12.4 13" stroke="#f39a1e" stroke-width="2.2"/><path d="M9.6 10 l2.4 2.3" stroke="#ffe27a" stroke-width=".8" stroke-dasharray="1 1"/><circle cx="6.2" cy="7.4" r="3.1" fill="#a9dcf7" stroke="#707070" stroke-width="1.2"/><circle cx="5.5" cy="6.7" r="1.2" fill="#d9f1fd"/></svg>
<svg style="left:911px;top:575px" width="14" height="14" viewBox="0 0 14 14"><rect x="0" y="0" width="14" height="14" rx="1.8" fill="#1e9bff"/><rect x="1.5" y="1" width="11" height="1" fill="#86ccff"/><rect x="1" y="3" width="12" height="10" fill="#ece8fb"/><path d="M8.8 9.6 L12.4 13" stroke="#f39a1e" stroke-width="2.2"/><path d="M9.6 10 l2.4 2.3" stroke="#ffe27a" stroke-width=".8" stroke-dasharray="1 1"/><circle cx="6.2" cy="7.4" r="3.1" fill="#a9dcf7" stroke="#707070" stroke-width="1.2"/><circle cx="5.5" cy="6.7" r="1.2" fill="#d9f1fd"/></svg>
<div style="left:691px;top:371px;width:94px;height:201px;border:3px solid #00309a;border-radius:3px;"></div>
<div style="left:1106px;top:371px;width:92px;height:203px;border:3px solid #00309a;border-radius:3px;"></div>
<div class="t" style="left:1071.50px;top:598.69px;font-size:11px;line-height:13px;color:#000;transform-origin:0 0;transform:scaleX(0.9902);-webkit-text-stroke:0.08px #000;">Tempo de produção total</div>
<div style="left:1197px;top:594px;width:207px;height:20px;background:#f0f0f0;border:1px solid #a4a7ac;"></div>
<div class="t" style="left:1206.40px;top:597.69px;font-size:11px;line-height:13px;color:#000;transform-origin:0 0;transform:scaleX(1.0526);-webkit-text-stroke:0.08px #000;">0:19:00,48</div>
<div style="left:1252px;top:639px;width:97px;height:38px;background:#e1e1e1;border:1px solid #adadad;"></div>
<div style="left:1360px;top:639px;width:97px;height:38px;background:#e1e1e1;border:1px solid #adadad;"></div>
<svg style="left:1268px;top:649px" width="17" height="18" viewBox="0 0 17 18"><path d="M5 5.4 L12.8 14 M12.8 5.4 L5 14" stroke="#000" stroke-opacity=".25" stroke-width="5.4" stroke-linecap="round"/><path d="M4.2 4.4 L12 13 M12 4.4 L4.2 13" stroke="#c4301a" stroke-width="5.4" stroke-linecap="round"/><path d="M4.2 4.4 L12 13 M12 4.4 L4.2 13" stroke="#ee5335" stroke-width="3.4" stroke-linecap="round"/><path d="M3.6 3.8 L6.8 7.2 M12 3.8 L9.6 6.4" stroke="#fa8262" stroke-width="1.4" stroke-linecap="round"/></svg>
<div class="t" style="left:1288.40px;top:651.69px;font-size:11px;line-height:13px;color:#000;transform-origin:0 0;transform:scaleX(0.9539);-webkit-text-stroke:0.08px #000;">Cancelar</div>
<svg style="left:1390px;top:650px" width="17" height="15" viewBox="0 0 17 15"><path d="M3.2 8.4 L6.8 12 L14.8 3.6" stroke="#000" stroke-opacity=".25" stroke-width="4" stroke-linecap="round" stroke-linejoin="round" fill="none"/><path d="M2.6 7.6 L6.4 11.2 L14.2 2.8" stroke="#2d8f1e" stroke-width="3.8" stroke-linecap="round" stroke-linejoin="round" fill="none"/><path d="M2.8 7.4 L6.4 10.6 L14 2.8" stroke="#52bf35" stroke-width="2" stroke-linecap="round" stroke-linejoin="round" fill="none"/></svg>
<div class="t" style="left:1410.30px;top:651.69px;font-size:11px;line-height:13px;color:#000;transform-origin:0 0;transform:scaleX(0.9430);-webkit-text-stroke:0.08px #000;">OK</div>
<div style="left:18px;top:868px;width:98px;height:20px;background:#e1e1e1;border:1px solid #adadad;"></div>
<svg style="left:31px;top:872px" width="12" height="12" viewBox="0 0 12 12"><path d="M6 .4 V11.6 M.4 6 H11.6" stroke="#1d5fe0" stroke-width="3.4" stroke-linejoin="round"/><path d="M6 1.4 V10.6 M1.4 6 H10.6" stroke="#4a90f6" stroke-width="1.2"/></svg>
<div class="t" style="left:48.40px;top:871.69px;font-size:11px;line-height:13px;color:#000;transform-origin:0 0;transform:scaleX(1.0087);-webkit-text-stroke:0.08px #000;">Inc.Produto</div>
<div style="left:66px;top:883px;width:7px;height:1px;background:#000;"></div>
<div style="left:18px;top:891px;width:98px;height:20px;background:#e1e1e1;border:1px solid #adadad;"></div>
<svg style="left:44px;top:899px" width="12" height="4" viewBox="0 0 12 4"><rect x="0" y=".2" width="12" height="3.6" rx=".8" fill="#1d5fe0"/><rect x="1" y="1.4" width="10" height="1.2" fill="#3f86f4"/></svg>
<div class="t" style="left:61.40px;top:894.69px;font-size:11px;line-height:13px;color:#000;transform-origin:0 0;transform:scaleX(0.9242);-webkit-text-stroke:0.08px #000;">Excluir</div>
<div style="left:68px;top:906px;width:5px;height:1px;background:#000;"></div>
<div style="left:18px;top:914px;width:98px;height:20px;background:#e1e1e1;border:1px solid #adadad;"></div>
<svg style="left:27px;top:916px" width="14" height="15" viewBox="0 0 14 15"><path d="M1 .8 H9.5 L13 4.2 V14.2 H1 Z" fill="#fbfbff" stroke="#7f8cc0" stroke-width=".9"/><path d="M9.5 .8 V4.2 H13" fill="#dfe4f5" stroke="#7f8cc0" stroke-width=".7"/><circle cx="6.6" cy="8.4" r="3" fill="#c9c3ee" stroke="#9a92d6" stroke-width="1.3" stroke-dasharray="1.4 .9"/><circle cx="6.6" cy="8.4" r="1" fill="#fbfbff"/><path d="M2 14.8 H13.6 V5" stroke="#555" stroke-width=".8" opacity=".45" fill="none"/></svg>
<div class="t" style="left:45.30px;top:917.69px;font-size:11px;line-height:13px;color:#000;transform-origin:0 0;transform:scaleX(0.9531);-webkit-text-stroke:0.08px #000;">Ficha técnica</div>
<div style="left:45px;top:929px;width:6px;height:1px;background:#000;"></div>
<div style="left:18px;top:937px;width:98px;height:20px;background:#e1e1e1;border:1px solid #adadad;"></div>
<svg style="left:46px;top:940px" width="14" height="14" viewBox="0 0 14 14"><rect x="0" y="0" width="14" height="14" rx="1.8" fill="#1e9bff"/><rect x="1.5" y="1" width="11" height="1" fill="#86ccff"/><rect x="1" y="3" width="12" height="10" fill="#ece8fb"/><path d="M8.8 9.6 L12.4 13" stroke="#f39a1e" stroke-width="2.2"/><path d="M9.6 10 l2.4 2.3" stroke="#ffe27a" stroke-width=".8" stroke-dasharray="1 1"/><circle cx="6.2" cy="7.4" r="3.1" fill="#a9dcf7" stroke="#707070" stroke-width="1.2"/><circle cx="5.5" cy="6.7" r="1.2" fill="#d9f1fd"/></svg>
<div class="t" style="left:63.60px;top:940.69px;font-size:11px;line-height:13px;color:#000;transform-origin:0 0;transform:scaleX(1.0471);-webkit-text-stroke:0.08px #000;">Itens</div>
<div style="left:119px;top:868px;width:98px;height:20px;background:#e1e1e1;border:1px solid #adadad;"></div>
<svg style="left:129px;top:872px" width="12" height="12" viewBox="0 0 12 12"><path d="M6 .4 V11.6 M.4 6 H11.6" stroke="#1d5fe0" stroke-width="3.4" stroke-linejoin="round"/><path d="M6 1.4 V10.6 M1.4 6 H10.6" stroke="#4a90f6" stroke-width="1.2"/></svg>
<div class="t" style="left:146.60px;top:871.69px;font-size:11px;line-height:13px;color:#000;transform-origin:0 0;transform:scaleX(0.9566);-webkit-text-stroke:0.08px #000;">Incluir Comb.</div>
<div style="left:150px;top:883px;width:6px;height:1px;background:#000;"></div>
<div style="left:119px;top:891px;width:98px;height:20px;background:#e1e1e1;border:1px solid #adadad;"></div>
<svg style="left:130px;top:893px" width="15" height="15" viewBox="0 0 15 15"><path d="M1 4.5 L7 2 L12.5 4 L12.5 10.5 L6.5 13.5 L1 11 Z" fill="#e3b23c" stroke="#a8781a" stroke-width=".7"/><path d="M1 4.5 L6.5 7 L12.5 4 M6.5 7 V13.5" stroke="#a8781a" stroke-width=".7" fill="none"/><path d="M3.5 1.2 L7 2.8 L10 1.4" stroke="#c99a2e" stroke-width="1.4" fill="none"/><circle cx="10.8" cy="11" r="3.6" fill="#2fae2f" stroke="#1d7a1d" stroke-width=".6"/><path d="M10.8 8.8 V13.2 M8.6 11 H13" stroke="#fff" stroke-width="1.4"/></svg>
<div class="t" style="left:149.60px;top:894.69px;font-size:11px;line-height:13px;color:#000;transform-origin:0 0;transform:scaleX(0.9843);-webkit-text-stroke:0.08px #000;">Inc.Revisão</div>
<div style="left:167px;top:906px;width:8px;height:1px;background:#000;"></div>
<div style="left:119px;top:914px;width:98px;height:20px;background:#cfcfcf;border:1px solid #cacaca;"></div>
<svg style="left:130px;top:917px" width="14" height="14" viewBox="0 0 14 14"><g opacity="0.5"><path d="M13.88 6.41 L13.88 7.59 L12.31 8.00 L12.00 9.03 L13.10 10.22 L12.47 11.21 L10.93 10.71 L10.11 11.41 L10.39 13.01 L9.32 13.50 L8.30 12.24 L7.23 12.40 L6.60 13.89 L5.44 13.72 L5.26 12.11 L4.28 11.66 L2.94 12.58 L2.06 11.81 L2.77 10.36 L2.19 9.45 L0.57 9.50 L0.24 8.37 L1.63 7.54 L1.63 6.46 L0.24 5.63 L0.57 4.50 L2.19 4.55 L2.77 3.64 L2.06 2.19 L2.94 1.42 L4.28 2.34 L5.26 1.89 L5.44 0.28 L6.60 0.11 L7.23 1.60 L8.30 1.76 L9.32 0.50 L10.39 0.99 L10.11 2.59 L10.93 3.29 L12.47 2.79 L13.10 3.78 L12.00 4.97 L12.31 6.00 Z" fill="#c6c2ee" stroke="#8d87d0" stroke-width=".9" stroke-linejoin="round"/><circle cx="7" cy="7" r="3.6" fill="#d4d0f4"/><circle cx="7" cy="7" r="1.3" fill="#eeeef6" stroke="#8d87d0" stroke-width=".8"/></g></svg>
<div class="t" style="left:148.50px;top:917.69px;font-size:11px;line-height:13px;color:#8c8c8c;transform-origin:0 0;transform:scaleX(0.9723);-webkit-text-stroke:0.08px #8c8c8c;">Cfg. modelo</div>
<div style="left:148px;top:929px;width:8px;height:1px;background:#8c8c8c;"></div>
<div style="left:119px;top:937px;width:98px;height:20px;background:#cfcfcf;border:1px solid #cacaca;"></div>
<svg style="left:135px;top:939px" width="15" height="15" viewBox="0 0 15 15"><g opacity="0.55"><rect x=".5" y=".5" width="13.6" height="13.6" rx="1.6" fill="#1e9bff"/><rect x="1.6" y="1.4" width="11.4" height="1" fill="#8fd0ff"/><rect x="1.5" y="3.4" width="11.6" height="9.8" fill="#f4f0ff"/><rect x="1.5" y="6" width="11.6" height="4.2" fill="#f45a2a"/><path d="M1.5 8.1 H13.1 M3.8 3.4 V13.2 M6.1 3.4 V13.2 M8.4 3.4 V13.2 M10.7 3.4 V13.2 M1.5 5 H13.1 M1.5 11.6 H13.1" stroke="#fff" stroke-width=".7" opacity=".85"/></g></svg>
<div class="t" style="left:154.00px;top:940.69px;font-size:11px;line-height:13px;color:#8c8c8c;transform-origin:0 0;transform:scaleX(0.9534);-webkit-text-stroke:0.08px #8c8c8c;">Lib.Venda</div>
<div style="left:220px;top:868px;width:98px;height:20px;background:#e1e1e1;border:1px solid #adadad;"></div>
<svg style="left:247px;top:872px" width="12" height="12" viewBox="0 0 12 12"><path d="M6 .4 V11.6 M.4 6 H11.6" stroke="#1d5fe0" stroke-width="3.4" stroke-linejoin="round"/><path d="M6 1.4 V10.6 M1.4 6 H10.6" stroke="#4a90f6" stroke-width="1.2"/></svg>
<div class="t" style="left:264.50px;top:871.69px;font-size:11px;line-height:13px;color:#000;transform-origin:0 0;transform:scaleX(0.9678);-webkit-text-stroke:0.08px #000;">Incluir</div>
<div style="left:264px;top:883px;width:3px;height:1px;background:#000;"></div>
<div style="left:220px;top:891px;width:98px;height:20px;background:#e1e1e1;border:1px solid #adadad;"></div>
<svg style="left:228px;top:893px" width="16" height="15" viewBox="0 0 16 15"><rect x=".5" y=".5" width="15" height="14" fill="#fff" stroke="#2c6fd8"/><rect x="1" y="1" width="14" height="2.6" fill="#2c6fd8"/><rect x="1" y="1" width="7" height="2.6" fill="#5e9bf0"/><path d="M4 5 V12 H7 M4 8 H7" stroke="#888" stroke-width="1" fill="none"/><rect x="8" y="6" width="3.6" height="3" fill="#f28a1e"/><rect x="8" y="10.6" width="3.6" height="3" fill="#f28a1e"/></svg>
<div class="t" style="left:247.90px;top:894.69px;font-size:11px;line-height:13px;color:#000;transform-origin:0 0;transform:scaleX(1.0105);-webkit-text-stroke:0.08px #000;">Alt.Estrutura</div>
<div style="left:264px;top:906px;width:7px;height:1px;background:#000;"></div>
<div style="left:220px;top:914px;width:98px;height:20px;background:#cfcfcf;border:1px solid #cacaca;"></div>
<svg style="left:234px;top:918px" width="12" height="12" viewBox="0 0 12 12"><path d="M6 .4 V11.6 M.4 6 H11.6" stroke="#8fb4f0" stroke-width="3.4" stroke-linejoin="round"/><path d="M6 1.4 V10.6 M1.4 6 H10.6" stroke="#a6c6f7" stroke-width="1.2"/></svg>
<div class="t" style="left:251.40px;top:917.69px;font-size:11px;line-height:13px;color:#8c8c8c;transform-origin:0 0;transform:scaleX(0.9687);-webkit-text-stroke:0.08px #8c8c8c;">Cmb.p/Tipo</div>
<div style="left:286px;top:929px;width:7px;height:1px;background:#8c8c8c;"></div>
<div style="left:220px;top:937px;width:98px;height:20px;background:#e1e1e1;border:1px solid #adadad;"></div>
<svg style="left:225px;top:939px" width="16" height="16" viewBox="0 0 16 16"><path d="M5 2.5 H12.5 L15.5 5.5 V15.5 H5 Z" fill="#fff" stroke="#5b78c0" stroke-width=".9"/><path d="M7 8 H14 M7 10 H14 M7 12 H14 M7 14 H14 M12 7 V15" stroke="#8aa5e0" stroke-width=".7"/><path d="M12.5 2.5 V5.5 H15.5" fill="#dfe6f8" stroke="#5b78c0" stroke-width=".7"/><rect x=".4" y="1.4" width="8.6" height="8" rx=".8" fill="#1f8a3a" stroke="#12652a" stroke-width=".6"/><rect x="1.6" y="2.4" width="6.2" height="6" fill="#e9f6ec"/><path d="M2.6 3.2 L6.8 7.8 M6.8 3.2 L2.6 7.8" stroke="#167a30" stroke-width="1.5"/></svg>
<div class="t" style="left:244.60px;top:940.69px;font-size:11px;line-height:13px;color:#000;transform-origin:0 0;transform:scaleX(0.9351);-webkit-text-stroke:0.08px #000;">Imp.cod.SPED</div>
<div style="left:321px;top:868px;width:98px;height:20px;background:#e1e1e1;border:1px solid #adadad;"></div>
<svg style="left:345px;top:871px" width="15" height="14" viewBox="0 0 15 14"><rect x=".6" y="4.6" width="10.4" height="8.8" fill="#e9edfa" stroke="#8b9fd0" stroke-width="1"/><rect x="2.2" y="6.6" width="7.2" height="5.2" fill="#c5d1f0"/><path d="M3 4.6 C5 1.2 9 .2 12.4 1 C14.6 1.6 15 3.6 13.6 4.8 C12 6 9.4 6.2 7.4 5.4 L5.6 6 Z" fill="#f0c56c" stroke="#b98a34" stroke-width=".7"/><path d="M7 3.4 L10.6 2.8 M7.6 4.6 L11.4 4" stroke="#b98a34" stroke-width=".5" fill="none"/></svg>
<div class="t" style="left:363.70px;top:871.69px;font-size:11px;line-height:13px;color:#000;transform-origin:0 0;transform:scaleX(0.9936);-webkit-text-stroke:0.08px #000;">Alterar</div>
<div style="left:373px;top:883px;width:3px;height:1px;background:#000;"></div>
<div style="left:321px;top:891px;width:98px;height:20px;background:#e1e1e1;border:1px solid #adadad;"></div>
<svg style="left:324px;top:894px" width="15" height="14" viewBox="0 0 15 14"><rect x=".6" y="4.6" width="10.4" height="8.8" fill="#e9edfa" stroke="#8b9fd0" stroke-width="1"/><rect x="2.2" y="6.6" width="7.2" height="5.2" fill="#c5d1f0"/><path d="M3 4.6 C5 1.2 9 .2 12.4 1 C14.6 1.6 15 3.6 13.6 4.8 C12 6 9.4 6.2 7.4 5.4 L5.6 6 Z" fill="#f0c56c" stroke="#b98a34" stroke-width=".7"/><path d="M7 3.4 L10.6 2.8 M7.6 4.6 L11.4 4" stroke="#b98a34" stroke-width=".5" fill="none"/></svg>
<div class="t" style="left:342.90px;top:894.69px;font-size:11px;line-height:13px;color:#000;transform-origin:0 0;transform:scaleX(0.9612);-webkit-text-stroke:0.08px #000;">Alteração Geral</div>
<div style="left:391px;top:906px;width:8px;height:1px;background:#000;"></div>
<div style="left:321px;top:914px;width:98px;height:20px;background:#e1e1e1;border:1px solid #adadad;"></div>
<svg style="left:340px;top:918px" width="16" height="12" viewBox="0 0 16 12"><defs><linearGradient id="sk340" x1="0" y1="0" x2="0" y2="1"><stop offset="0" stop-color="#0b3a9a"/><stop offset=".55" stop-color="#6aa8ec"/><stop offset=".56" stop-color="#7ac043"/><stop offset="1" stop-color="#2f8a1f"/></linearGradient></defs><rect x=".5" y=".5" width="15" height="11" fill="#fff" stroke="#6a6a6a"/><rect x="2" y="2" width="12" height="8" fill="url(#sk340)"/><circle cx="11" cy="4" r="1.1" fill="#fff" opacity=".9"/><path d="M2 8 C6 5.4 10 5.6 14 7 V10 H2 Z" fill="#57a92f"/></svg>
<div class="t" style="left:359.70px;top:917.69px;font-size:11px;line-height:13px;color:#000;transform-origin:0 0;transform:scaleX(0.9617);-webkit-text-stroke:0.08px #000;">Imagens</div>
<div style="left:321px;top:937px;width:98px;height:20px;background:#e1e1e1;border:1px solid #adadad;"></div>
<svg style="left:322px;top:939px" width="15" height="15" viewBox="0 0 15 15"><g opacity="1"><rect x=".5" y=".5" width="13.6" height="13.6" rx="1.6" fill="#1e9bff"/><rect x="1.6" y="1.4" width="11.4" height="1" fill="#8fd0ff"/><rect x="1.5" y="3.4" width="11.6" height="9.8" fill="#f4f0ff"/><rect x="1.5" y="6" width="11.6" height="4.2" fill="#f45a2a"/><path d="M1.5 8.1 H13.1 M3.8 3.4 V13.2 M6.1 3.4 V13.2 M8.4 3.4 V13.2 M10.7 3.4 V13.2 M1.5 5 H13.1 M1.5 11.6 H13.1" stroke="#fff" stroke-width=".7" opacity=".85"/></g></svg>
<div class="t" style="left:341.80px;top:940.69px;font-size:11px;line-height:13px;color:#000;transform-origin:0 0;transform:scaleX(0.9993);-webkit-text-stroke:0.08px #000;">Atu.lib.ven.cmb</div>
<div style="left:422px;top:868px;width:98px;height:20px;background:#e1e1e1;border:1px solid #adadad;"></div>
<svg style="left:439px;top:871px" width="14" height="14" viewBox="0 0 14 14"><rect x="0" y="0" width="14" height="14" rx="1.8" fill="#1e9bff"/><rect x="1.5" y="1" width="11" height="1" fill="#86ccff"/><rect x="1" y="3" width="12" height="10" fill="#ece8fb"/><path d="M8.8 9.6 L12.4 13" stroke="#f39a1e" stroke-width="2.2"/><path d="M9.6 10 l2.4 2.3" stroke="#ffe27a" stroke-width=".8" stroke-dasharray="1 1"/><circle cx="6.2" cy="7.4" r="3.1" fill="#a9dcf7" stroke="#707070" stroke-width="1.2"/><circle cx="5.5" cy="6.7" r="1.2" fill="#d9f1fd"/></svg>
<div class="t" style="left:456.60px;top:871.69px;font-size:11px;line-height:13px;color:#000;transform-origin:0 0;transform:scaleX(0.9640);-webkit-text-stroke:0.08px #000;">Consultar</div>
<div style="left:457px;top:883px;width:8px;height:1px;background:#000;"></div>
<div style="left:422px;top:891px;width:98px;height:20px;background:#e1e1e1;border:1px solid #adadad;"></div>
<svg style="left:448px;top:893px" width="16" height="14" viewBox="0 0 16 14"><path d="M4 1 L9 .4 L12.6 5.8 L6.6 7 Z" fill="#7fb8ee" stroke="#4d86c8" stroke-width=".6"/><path d="M1 7.2 L5.2 4.2 L14.6 6.4 L15.2 10 L9.4 13.4 L1.4 11 Z" fill="#e4e4e4" stroke="#8e8e8e" stroke-width=".7"/><path d="M1.4 8 L9.2 10.4 L15 7" stroke="#fff" stroke-width=".8" fill="none"/><path d="M3 11.8 L9.4 13.6 L14.6 10.8" stroke="#777" stroke-width=".8" fill="none"/></svg>
<div class="t" style="left:467.40px;top:894.69px;font-size:11px;line-height:13px;color:#000;transform-origin:0 0;transform:scaleX(0.9477);-webkit-text-stroke:0.08px #000;">Listar</div>
<div style="left:467px;top:906px;width:6px;height:1px;background:#000;"></div>
<div style="left:422px;top:914px;width:98px;height:20px;background:#e1e1e1;border:1px solid #adadad;"></div>
<svg style="left:433px;top:915px" width="16" height="16" viewBox="0 0 16 16"><defs><radialGradient id="ck" cx=".4" cy=".35" r=".75"><stop offset="0" stop-color="#fff"/><stop offset=".6" stop-color="#cfe8fb"/><stop offset="1" stop-color="#9dc8ea"/></radialGradient></defs><circle cx="8" cy="8.4" r="7" fill="#9a9a9a"/><circle cx="7.8" cy="7.8" r="6.6" fill="url(#ck)" stroke="#8a8f96" stroke-width="1.1"/><path d="M4.6 4.6 L7.8 7.8 L10.4 5.6" stroke="#222" stroke-width="1.1" fill="none"/></svg>
<div class="t" style="left:452.80px;top:917.69px;font-size:11px;line-height:13px;color:#000;transform-origin:0 0;transform:scaleX(1.0002);-webkit-text-stroke:0.08px #000;">Atu.tempos</div>
<div style="left:419px;top:912px;width:104px;height:25px;border:3px solid #00309a;border-radius:3px;"></div>
<div style="left:526px;top:867px;width:1px;height:88px;background:#a0a0a0;"></div>
<svg style="left:533px;top:874px" width="14" height="14" viewBox="0 0 14 14"><path d="M4.2 .4 H9.8 L13.6 4.2 V9.8 L9.8 13.6 H4.2 L.4 9.8 V4.2 Z" fill="#e8462c" stroke="#b02a14" stroke-width=".6"/><path d="M4.3 4.3 L9.7 9.7 M9.7 4.3 L4.3 9.7" stroke="#fff" stroke-width="2.1" stroke-linecap="round"/></svg>
<div class="t" style="left:550.90px;top:866.84px;font-size:12px;line-height:14px;color:#333;transform-origin:0 0;transform:scaleX(0.9770);font-weight:bold;-webkit-text-stroke:0.08px #333;">Imagem</div>
<div class="t" style="left:559.90px;top:880.84px;font-size:12px;line-height:14px;color:#333;transform-origin:0 0;transform:scaleX(0.9002);font-weight:bold;-webkit-text-stroke:0.08px #333;">não</div>
<div class="t" style="left:532.70px;top:890.34px;font-size:12px;line-height:14px;color:#333;transform-origin:0 0;transform:scaleX(0.9742);font-weight:bold;-webkit-text-stroke:0.08px #333;">encontrada!</div>
<div style="left:1364px;top:868px;width:23px;height:20px;background:#e1e1e1;border:1px solid #adadad;"></div>
<div style="left:1390px;top:868px;width:23px;height:20px;background:#e1e1e1;border:1px solid #adadad;"></div>
<div style="left:1416px;top:868px;width:23px;height:20px;background:#e1e1e1;border:1px solid #adadad;"></div>
<div style="left:1442px;top:868px;width:23px;height:20px;background:#e1e1e1;border:1px solid #adadad;"></div>
<div style="left:1468px;top:868px;width:23px;height:20px;background:#e1e1e1;border:1px solid #adadad;"></div>
<div style="left:1494px;top:868px;width:23px;height:20px;background:#e1e1e1;border:1px solid #adadad;"></div>
<div style="left:1520px;top:868px;width:23px;height:20px;background:#e1e1e1;border:1px solid #adadad;"></div>
<div style="left:1546px;top:868px;width:23px;height:20px;background:#e1e1e1;border:1px solid #adadad;"></div>
<div style="left:1572px;top:868px;width:23px;height:20px;background:#e1e1e1;border:1px solid #adadad;"></div>
<div style="left:1598px;top:868px;width:23px;height:20px;background:#e1e1e1;border:1px solid #adadad;"></div>
<svg style="left:1367px;top:872px" width="17" height="11" viewBox="0 0 17 11"><path d="M2.2 3.6 L8.4 8.2" stroke="#4e4e4e" stroke-width="3.6" stroke-linecap="round"/><path d="M7.4 2 L13.6 6.6" stroke="#4e4e4e" stroke-width="3.6" stroke-linecap="round"/><path d="M4 2.6 L8 1.4" stroke="#4e4e4e" stroke-width="2"/><path d="M2 3 L6 5.8 M7.2 1.4 L11 4.2" stroke="#9a9a9a" stroke-width=".9" stroke-linecap="round"/><circle cx="7.8" cy="8" r="1.9" fill="#5a6068"/><circle cx="13" cy="6.6" r="1.9" fill="#5a6068"/><circle cx="7.8" cy="8.1" r="1.35" fill="#bfe2fb"/><circle cx="13" cy="6.7" r="1.35" fill="#bfe2fb"/></svg>
<svg style="left:1393px;top:870px" width="16" height="16" viewBox="0 0 16 16"><path d="M5 2.5 H12.5 L15.5 5.5 V15.5 H5 Z" fill="#fff" stroke="#5b78c0" stroke-width=".9"/><path d="M7 8 H14 M7 10 H14 M7 12 H14 M7 14 H14 M12 7 V15" stroke="#8aa5e0" stroke-width=".7"/><path d="M12.5 2.5 V5.5 H15.5" fill="#dfe6f8" stroke="#5b78c0" stroke-width=".7"/><rect x=".4" y="1.4" width="8.6" height="8" rx=".8" fill="#1f8a3a" stroke="#12652a" stroke-width=".6"/><rect x="1.6" y="2.4" width="6.2" height="6" fill="#e9f6ec"/><path d="M2.6 3.2 L6.8 7.8 M6.8 3.2 L2.6 7.8" stroke="#167a30" stroke-width="1.5"/></svg>
<svg style="left:1421px;top:870px" width="13" height="15" viewBox="0 0 13 15"><path d="M.6 .6 H8.6 L12 4 V14 H.6 Z" fill="#fdfdff" stroke="#6f7fc0" stroke-width=".9"/><path d="M8.6 .6 V4 H12" fill="#dfe4f5" stroke="#6f7fc0" stroke-width=".7"/><rect x="2" y="6" width="8.6" height="6.6" fill="#b9c3ea"/><rect x="2" y="6" width="8.6" height="1.6" fill="#e6eafa"/><path d="M1.4 14.6 H12.6 V5" stroke="#444" stroke-width=".8" opacity=".5" fill="none"/></svg>
<svg style="left:1445px;top:870px" width="17" height="15" viewBox="0 0 17 15"><rect x=".5" y=".5" width="13.6" height="13.6" rx="1.4" fill="#1e9bff"/><rect x="1.6" y="1.4" width="11.4" height="1" fill="#8fd0ff"/><rect x="1.5" y="3.4" width="11.6" height="9.8" fill="#f4f0ff"/><rect x="1.5" y="3.4" width="3" height="9.8" fill="#f45a2a"/><path d="M1.5 5.4 H13 M1.5 7.4 H13 M1.5 9.4 H13 M1.5 11.4 H13 M4.5 3.4 V13.2 M7 3.4 V13.2 M9.6 3.4 V13.2" stroke="#c9b9e8" stroke-width=".6"/><path d="M5 7 C7 3.6 11 2.6 14.4 3.4 C16.6 4 17 6 15.6 7.2 C14 8.4 11.4 8.6 9.4 7.8 L7.6 8.4 Z" fill="#f0c56c" stroke="#b98a34" stroke-width=".7"/></svg>
<svg style="left:1471px;top:870px" width="15" height="15" viewBox="0 0 15 15"><rect x="0" y="0" width="14" height="14" rx="1.8" fill="#1e9bff"/><rect x="1.5" y="1" width="11" height="1" fill="#86ccff"/><rect x="1" y="3" width="12" height="10" fill="#ece8fb"/><path d="M4.6 12.6 V7" stroke="#f01414" stroke-width="2.2"/><path d="M1.9 7.6 L4.6 3.6 L7.3 7.6 Z" fill="#f01414"/><path d="M9.4 3.6 V9" stroke="#0f8a33" stroke-width="2.2"/><path d="M6.8 8.6 L9.4 12.6 L12 8.6 Z" fill="#0f8a33"/></svg>
<svg style="left:1499px;top:873px" width="14" height="11" viewBox="0 0 14 11"><path d="M.8 4.6 C.8 1.6 4.4 .4 7.6 .8 C11 1.2 12.8 3.4 12.4 5.8 C12 7.6 10.6 7.2 9.8 8 C9.2 8.8 9.8 10 7.8 10.2 C4.2 10.4 .8 8.2 .8 4.6 Z" fill="#f2c27a" stroke="#c99238" stroke-width=".7"/><circle cx="4.4" cy="3.2" r="1.05" fill="#3b7be0"/><circle cx="8.2" cy="2.8" r="1.05" fill="#3aa63a"/><circle cx="10.2" cy="5.6" r="1" fill="#e04a3a"/><circle cx="3.6" cy="6.2" r=".9" fill="#f6e85a"/></svg>
<svg style="left:1523px;top:871px" width="17" height="14" viewBox="0 0 17 14"><path d="M1.4 7.6 L5 2.6 L12.6 2 L15.4 7 L15.2 9.4 L8.6 13 L1.6 10.4 Z" fill="#b9b9b9" stroke="#8f8f8f" stroke-width=".6"/><path d="M1.4 7.6 L8.4 10.4 L15.4 7 L15.2 9.4 L8.6 13 L1.6 10.4 Z" fill="#9c9c9c"/><path d="M1.4 7.6 L5 2.6 L12.6 2 L15.4 7 L8.4 10.4 Z" fill="#f4f4f4"/><path d="M5 2.6 L12.6 2 L13 5.4 L5.2 6.2 Z" fill="#ffffff"/><path d="M6 3.6 L10.6 2.4 L9.6 5.6 L8.6 4.4 Z" fill="#2f7be6"/></svg>
<svg style="left:1550px;top:871px" width="14" height="14" viewBox="0 0 14 14"><g opacity="1"><path d="M13.88 6.41 L13.88 7.59 L12.31 8.00 L12.00 9.03 L13.10 10.22 L12.47 11.21 L10.93 10.71 L10.11 11.41 L10.39 13.01 L9.32 13.50 L8.30 12.24 L7.23 12.40 L6.60 13.89 L5.44 13.72 L5.26 12.11 L4.28 11.66 L2.94 12.58 L2.06 11.81 L2.77 10.36 L2.19 9.45 L0.57 9.50 L0.24 8.37 L1.63 7.54 L1.63 6.46 L0.24 5.63 L0.57 4.50 L2.19 4.55 L2.77 3.64 L2.06 2.19 L2.94 1.42 L4.28 2.34 L5.26 1.89 L5.44 0.28 L6.60 0.11 L7.23 1.60 L8.30 1.76 L9.32 0.50 L10.39 0.99 L10.11 2.59 L10.93 3.29 L12.47 2.79 L13.10 3.78 L12.00 4.97 L12.31 6.00 Z" fill="#c6c2ee" stroke="#8d87d0" stroke-width=".9" stroke-linejoin="round"/><circle cx="7" cy="7" r="3.6" fill="#d4d0f4"/><circle cx="7" cy="7" r="1.3" fill="#eeeef6" stroke="#8d87d0" stroke-width=".8"/></g></svg>
<svg style="left:1576px;top:869px" width="15" height="17" viewBox="0 0 15 17"><path d="M.8 10.4 L4.6 8 H10.4 L14.2 10.4 V13.4 L8.4 16.4 L.8 14 Z" fill="#8e8e8e"/><path d="M.8 10.4 L4.6 8 H10.4 L14.2 10.4 L8.4 13.2 Z" fill="#fafafa" stroke="#9a9a9a" stroke-width=".5"/><path d="M.8 10.8 L8.4 13.6 L14.2 10.8 V13.4 L8.4 16.4 L.8 14 Z" fill="#c9c9c9"/><path d="M4.2 10.4 H10.8 L9.6 11.8 H5.4 Z" fill="#5a5a5a"/><path d="M5.4 1 H9.6 V5 H12.4 L7.5 10.4 L2.6 5 H5.4 Z" fill="#3fc52c" stroke="#1f8a16" stroke-width=".8"/><path d="M6.4 1.8 V5.8 H4.8" stroke="#9af07c" stroke-width=".9" fill="none"/></svg>
<svg style="left:1603px;top:870px" width="13" height="15" viewBox="0 0 13 15"><rect x=".6" y=".6" width="11.4" height="13.4" rx="1" fill="#f4f0ff" stroke="#2c7be0" stroke-width="1.2"/><path d="M3 4.2 L5 6.2 L8.4 1.8" stroke="#d8222a" stroke-width="1.3" fill="none"/><path d="M3 9.2 L5 11.2 L8.4 6.8" stroke="#d8222a" stroke-width="1.3" fill="none"/><path d="M1 14.8 H12.8 V3" stroke="#1a4a9a" stroke-width=".9" opacity=".6" fill="none"/></svg>
<div style="left:1629px;top:867px;width:1px;height:22px;background:#a0a0a0;"></div>
<div style="left:1636px;top:868px;width:23px;height:20px;background:#e1e1e1;border:1px solid #adadad;"></div>
<div style="left:1641px;top:872px;width:12px;height:12px;background:#fff;border:1px solid #8e8e8e;"></div>
<svg style="left:1641px;top:871px" width="13" height="13" viewBox="0 0 13 13"><path d="M2.6 6.4 L5.2 9.6 L10.8 2.2" stroke="#1a4fc0" stroke-width="2" fill="none"/></svg>
<div style="left:1662px;top:868px;width:23px;height:20px;background:#e1e1e1;border:1px solid #adadad;"></div>
<div style="left:1667px;top:872px;width:12px;height:12px;background:#fff;border:1px solid #8e8e8e;"></div>
<div style="left:1692px;top:867px;width:1px;height:22px;background:#a0a0a0;"></div>
<div style="left:1699px;top:868px;width:98px;height:20px;background:#e1e1e1;border:1px solid #adadad;"></div>
<svg style="left:1709px;top:870px" width="14" height="14" viewBox="0 0 14 14"><circle cx="7" cy="7" r="4.9" fill="none" stroke="#37a532" stroke-width="3.8" stroke-dasharray="8.6 1.66"/><circle cx="7" cy="7" r="5.2" fill="none" stroke="#7fdc6c" stroke-width="1.3" stroke-dasharray="8.6 2.29" stroke-dashoffset="-.3"/><path d="M9.2 .2 L13.6 3 L9 5.2 Z M.4 9.8 L5 9 L2.8 13.4 Z M12 12.8 L7.6 12 L10.6 8.6 Z" fill="#2c9a2a"/><circle cx="7" cy="7" r="2.2" fill="#e1e1e1"/></svg>
<div class="t" style="left:1728.70px;top:871.69px;font-size:11px;line-height:13px;color:#000;transform-origin:0 0;transform:scaleX(0.9678);-webkit-text-stroke:0.08px #000;">F5-Atualizar</div>
<div style="left:1771px;top:883px;width:5px;height:1px;background:#000;"></div>
<div style="left:1800px;top:868px;width:83px;height:20px;background:#e1e1e1;border:1px solid #adadad;"></div>
<svg style="left:1809px;top:870px" width="16" height="15" viewBox="0 0 16 15"><path d="M.8 1.8 C4 .2 11 .2 14.2 1.8 L9 8 V13.6 L6 12.2 V8 Z" fill="#d9dce2" stroke="#7e838c" stroke-width=".9"/><path d="M2.4 2.8 L6.6 8 V11.6" stroke="#fff" stroke-width="1" fill="none"/><ellipse cx="7.5" cy="2" rx="6.2" ry="1.3" fill="#f6f6f8" stroke="#9a9ea8" stroke-width=".6"/><path d="M8 10.2 L10 12.8 L14 7.4" stroke="#1a5fd0" stroke-width="2" fill="none"/></svg>
<div class="t" style="left:1828.50px;top:871.69px;font-size:11px;line-height:13px;color:#000;transform-origin:0 0;transform:scaleX(0.9690);-webkit-text-stroke:0.08px #000;">F9-Filtros</div>
<div style="left:1885px;top:868px;width:11px;height:20px;background:#e1e1e1;border:1px solid #adadad;"></div>
<svg style="left:1887px;top:876px" width="7" height="4" viewBox="0 0 7 4"><path d="M0 0 H7 L3.5 4 Z" fill="#000"/></svg>
<div style="left:1800px;top:923px;width:98px;height:42px;background:#e1e1e1;border:1px solid #adadad;"></div>
<svg style="left:1829px;top:936px" width="16" height="15" viewBox="0 0 16 15"><path d="M6 1 L14 .4 V13.6 L6 14.6 Z" fill="#6e6e6e"/><path d="M7.6 1.6 L13 1.2 V13 L7.6 13.8 Z" fill="#9c9ad6"/><path d="M7.6 1.6 L9.4 1.5 V13.5 L7.6 13.8 Z" fill="#d4dcf4"/><rect x="10.4" y="3.4" width="1.8" height=".9" fill="#fff"/><rect x="10" y="7.4" width="1.2" height="1" fill="#dcdcf0"/><path d="M.6 5.6 H4.2 V3.2 L8.4 7.4 L4.2 11.6 V9.2 H.6 Z" fill="#4fd02a" stroke="#1f8a12" stroke-width=".8"/></svg>
<div class="t" style="left:1849.70px;top:937.69px;font-size:11px;line-height:13px;color:#000;transform-origin:0 0;transform:scaleX(0.8946);-webkit-text-stroke:0.08px #000;">Sair</div>
<div style="left:1850px;top:949px;width:7px;height:1px;background:#000;"></div>
</body></html>
